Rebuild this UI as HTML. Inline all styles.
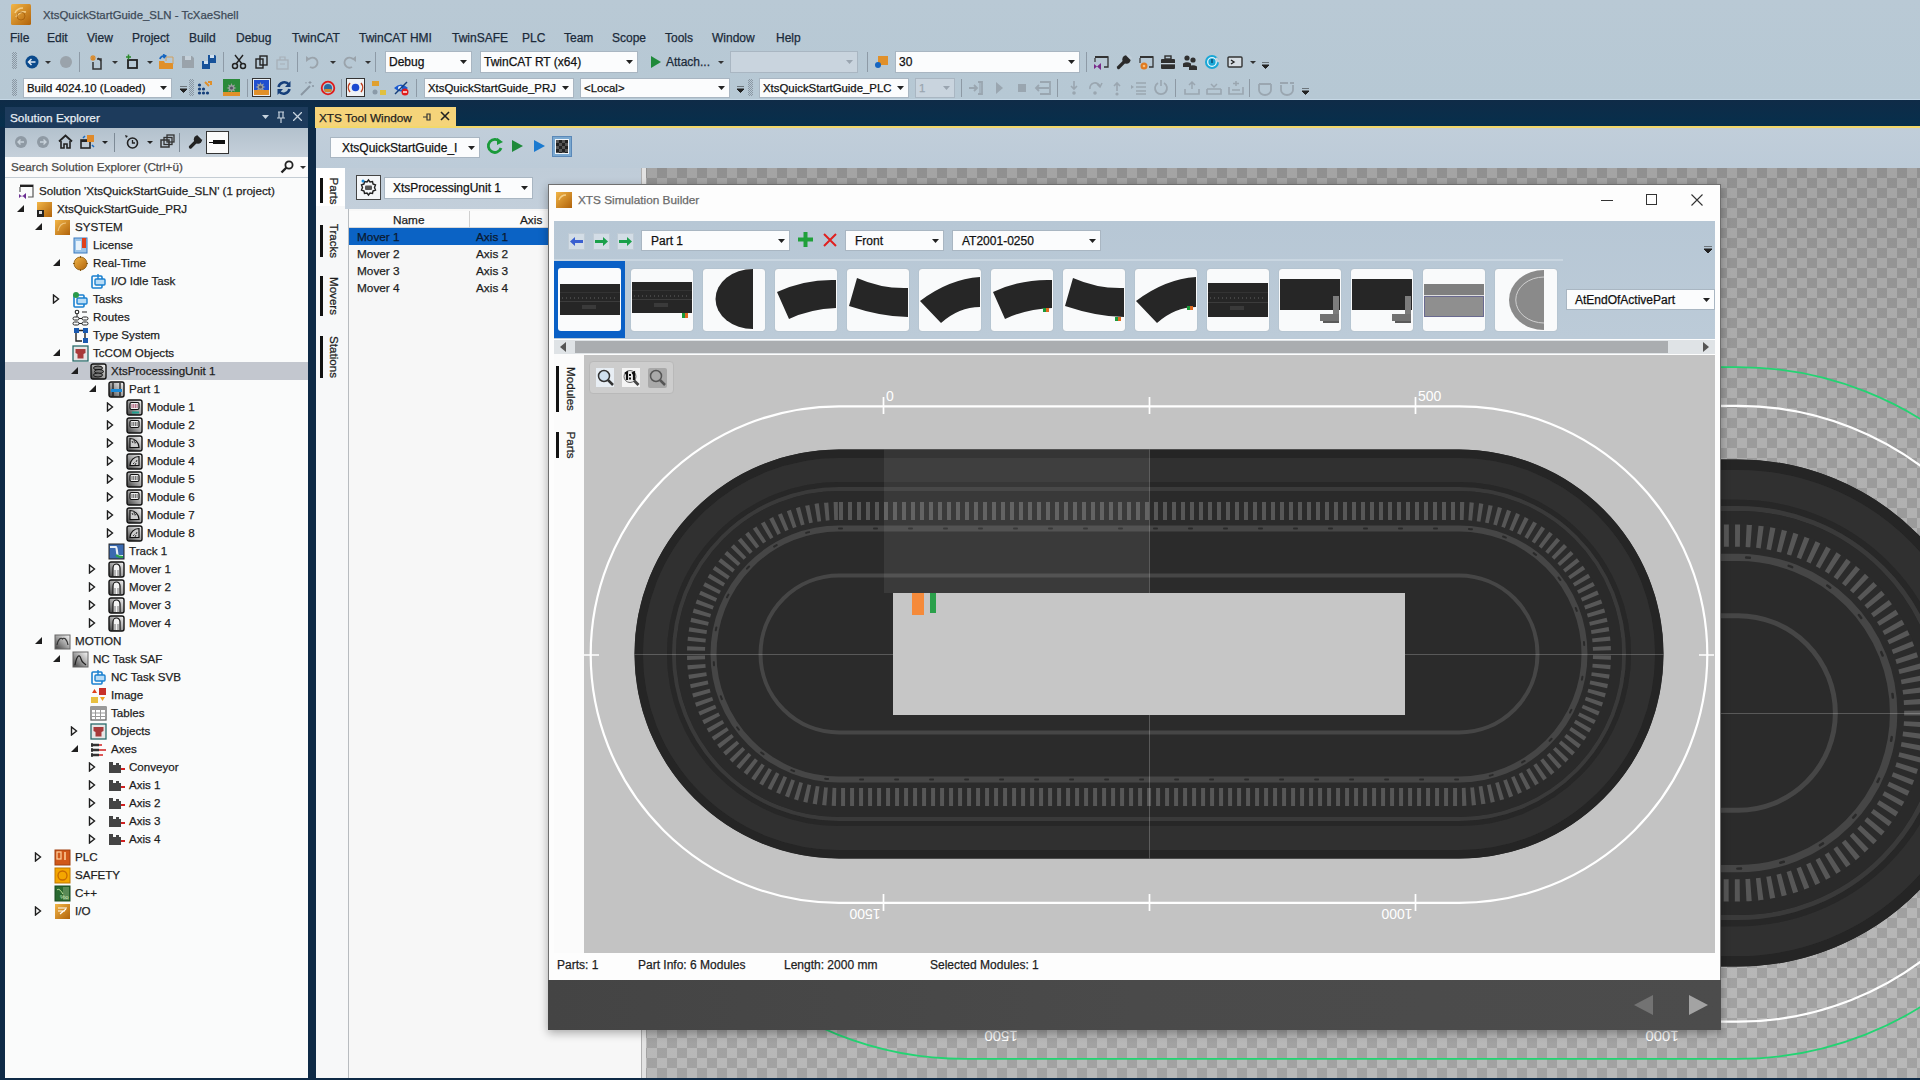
<!DOCTYPE html>
<html><head><meta charset="utf-8"><style>
html,body{margin:0;padding:0;width:1920px;height:1080px;overflow:hidden;background:#0e2a46;font-family:"Liberation Sans", sans-serif;}
svg text{font-family:"Liberation Sans", sans-serif;}
</style></head><body>
<svg width="0" height="0" style="position:absolute"><defs><linearGradient id="gOr" x1="0" y1="0" x2="1" y2="1"><stop offset="0" stop-color="#f2b648"/><stop offset="1" stop-color="#b0620a"/></linearGradient><linearGradient id="gGr" x1="1" y1="0" x2="0" y2="1"><stop offset="0" stop-color="#fafafa"/><stop offset="0.55" stop-color="#9a9a9a"/><stop offset="1" stop-color="#3a3a3a"/></linearGradient></defs></svg><div style="position:absolute;left:0px;top:0px;width:1920px;height:100px;background:linear-gradient(#b9c9d5,#b6c8d4)"></div><div style="position:absolute;left:0px;top:99px;width:1920px;height:1px;background:#c6d8e6"></div><svg style="position:absolute;left:11px;top:4px;" width="20" height="21" viewBox="0 0 20 21"><rect x="0" y="0" width="20" height="21" rx="1.5" fill="url(#gOr)"/><path d="M4 9Q6 4 12 4M5 13Q8 7 15 8" stroke="#f8d898" stroke-width="1.6" fill="none" opacity="0.85"/><circle cx="10" cy="12" r="4" fill="none" stroke="#a05a08" stroke-width="1" opacity="0.7"/></svg><div style="position:absolute;left:43px;top:7px;height:16px;line-height:16px;font-size:11.4px;color:#3d4a57;white-space:pre;-webkit-text-stroke:0.25px #3d4a57;">XtsQuickStartGuide_SLN - TcXaeShell</div><div style="position:absolute;left:10px;top:30px;height:16px;line-height:16px;font-size:12px;color:#1b2a3a;white-space:pre;-webkit-text-stroke:0.25px #1b2a3a;">File</div><div style="position:absolute;left:47px;top:30px;height:16px;line-height:16px;font-size:12px;color:#1b2a3a;white-space:pre;-webkit-text-stroke:0.25px #1b2a3a;">Edit</div><div style="position:absolute;left:87px;top:30px;height:16px;line-height:16px;font-size:12px;color:#1b2a3a;white-space:pre;-webkit-text-stroke:0.25px #1b2a3a;">View</div><div style="position:absolute;left:132px;top:30px;height:16px;line-height:16px;font-size:12px;color:#1b2a3a;white-space:pre;-webkit-text-stroke:0.25px #1b2a3a;">Project</div><div style="position:absolute;left:189px;top:30px;height:16px;line-height:16px;font-size:12px;color:#1b2a3a;white-space:pre;-webkit-text-stroke:0.25px #1b2a3a;">Build</div><div style="position:absolute;left:236px;top:30px;height:16px;line-height:16px;font-size:12px;color:#1b2a3a;white-space:pre;-webkit-text-stroke:0.25px #1b2a3a;">Debug</div><div style="position:absolute;left:292px;top:30px;height:16px;line-height:16px;font-size:12px;color:#1b2a3a;white-space:pre;-webkit-text-stroke:0.25px #1b2a3a;">TwinCAT</div><div style="position:absolute;left:359px;top:30px;height:16px;line-height:16px;font-size:12px;color:#1b2a3a;white-space:pre;-webkit-text-stroke:0.25px #1b2a3a;">TwinCAT HMI</div><div style="position:absolute;left:452px;top:30px;height:16px;line-height:16px;font-size:12px;color:#1b2a3a;white-space:pre;-webkit-text-stroke:0.25px #1b2a3a;">TwinSAFE</div><div style="position:absolute;left:522px;top:30px;height:16px;line-height:16px;font-size:12px;color:#1b2a3a;white-space:pre;-webkit-text-stroke:0.25px #1b2a3a;">PLC</div><div style="position:absolute;left:564px;top:30px;height:16px;line-height:16px;font-size:12px;color:#1b2a3a;white-space:pre;-webkit-text-stroke:0.25px #1b2a3a;">Team</div><div style="position:absolute;left:612px;top:30px;height:16px;line-height:16px;font-size:12px;color:#1b2a3a;white-space:pre;-webkit-text-stroke:0.25px #1b2a3a;">Scope</div><div style="position:absolute;left:665px;top:30px;height:16px;line-height:16px;font-size:12px;color:#1b2a3a;white-space:pre;-webkit-text-stroke:0.25px #1b2a3a;">Tools</div><div style="position:absolute;left:712px;top:30px;height:16px;line-height:16px;font-size:12px;color:#1b2a3a;white-space:pre;-webkit-text-stroke:0.25px #1b2a3a;">Window</div><div style="position:absolute;left:776px;top:30px;height:16px;line-height:16px;font-size:12px;color:#1b2a3a;white-space:pre;-webkit-text-stroke:0.25px #1b2a3a;">Help</div><div style="position:absolute;left:12px;top:52px;width:5px;height:17px;background-image:conic-gradient(#8a97a3 25%,transparent 0 50%,#8a97a3 0 75%,transparent 0);background-size:2px 2px"></div><div style="position:absolute;left:12px;top:79px;width:5px;height:17px;background-image:conic-gradient(#8a97a3 25%,transparent 0 50%,#8a97a3 0 75%,transparent 0);background-size:2px 2px"></div><div style="position:absolute;left:189px;top:79px;width:5px;height:17px;background-image:conic-gradient(#8a97a3 25%,transparent 0 50%,#8a97a3 0 75%,transparent 0);background-size:2px 2px"></div><div style="position:absolute;left:748px;top:79px;width:5px;height:17px;background-image:conic-gradient(#8a97a3 25%,transparent 0 50%,#8a97a3 0 75%,transparent 0);background-size:2px 2px"></div><div style="position:absolute;left:385px;top:51px;width:87px;height:22px;background:#fbfcfd;border:1px solid #a9b6c2;box-sizing:border-box"></div><div style="position:absolute;left:389px;top:54.0px;height:16px;line-height:16px;font-size:12px;color:#111;white-space:pre;-webkit-text-stroke:0.25px #111;">Debug</div><svg style="position:absolute;left:460px;top:60.0px;" width="8" height="5" viewBox="0 0 8 5"><path d="M0 0H7L3.5 4Z" fill="#222"/></svg><div style="position:absolute;left:480px;top:51px;width:158px;height:22px;background:#fbfcfd;border:1px solid #a9b6c2;box-sizing:border-box"></div><div style="position:absolute;left:484px;top:54.0px;height:16px;line-height:16px;font-size:12px;color:#111;white-space:pre;-webkit-text-stroke:0.25px #111;">TwinCAT RT (x64)</div><svg style="position:absolute;left:626px;top:60.0px;" width="8" height="5" viewBox="0 0 8 5"><path d="M0 0H7L3.5 4Z" fill="#222"/></svg><div style="position:absolute;left:730px;top:51px;width:128px;height:22px;background:#c9d4de;border:1px solid #a9b6c2;box-sizing:border-box"></div><div style="position:absolute;left:734px;top:54.0px;height:16px;line-height:16px;font-size:12px;color:#111;white-space:pre;-webkit-text-stroke:0.25px #111;"></div><svg style="position:absolute;left:846px;top:60.0px;" width="8" height="5" viewBox="0 0 8 5"><path d="M0 0H7L3.5 4Z" fill="#9aa5b0"/></svg><div style="position:absolute;left:666px;top:54px;height:16px;line-height:16px;font-size:12px;color:#1b2a3a;white-space:pre;-webkit-text-stroke:0.25px #1b2a3a;">Attach...</div><div style="position:absolute;left:895px;top:51px;width:185px;height:22px;background:#fbfcfd;border:1px solid #a9b6c2;box-sizing:border-box"></div><div style="position:absolute;left:899px;top:54.0px;height:16px;line-height:16px;font-size:12px;color:#111;white-space:pre;-webkit-text-stroke:0.25px #111;">30</div><svg style="position:absolute;left:1068px;top:60.0px;" width="8" height="5" viewBox="0 0 8 5"><path d="M0 0H7L3.5 4Z" fill="#222"/></svg><div style="position:absolute;left:23px;top:78px;width:149px;height:20px;background:#fbfcfd;border:1px solid #a9b6c2;box-sizing:border-box"></div><div style="position:absolute;left:27px;top:80.0px;height:16px;line-height:16px;font-size:11.4px;color:#111;white-space:pre;-webkit-text-stroke:0.25px #111;">Build 4024.10 (Loaded)</div><svg style="position:absolute;left:160px;top:86.0px;" width="8" height="5" viewBox="0 0 8 5"><path d="M0 0H7L3.5 4Z" fill="#222"/></svg><div style="position:absolute;left:424px;top:78px;width:150px;height:20px;background:#fbfcfd;border:1px solid #a9b6c2;box-sizing:border-box"></div><div style="position:absolute;left:428px;top:80.0px;height:16px;line-height:16px;font-size:11.4px;color:#111;white-space:pre;-webkit-text-stroke:0.25px #111;">XtsQuickStartGuide_PRJ</div><svg style="position:absolute;left:562px;top:86.0px;" width="8" height="5" viewBox="0 0 8 5"><path d="M0 0H7L3.5 4Z" fill="#222"/></svg><div style="position:absolute;left:580px;top:78px;width:150px;height:20px;background:#fbfcfd;border:1px solid #a9b6c2;box-sizing:border-box"></div><div style="position:absolute;left:584px;top:80.0px;height:16px;line-height:16px;font-size:11.4px;color:#111;white-space:pre;-webkit-text-stroke:0.25px #111;">&lt;Local&gt;</div><svg style="position:absolute;left:718px;top:86.0px;" width="8" height="5" viewBox="0 0 8 5"><path d="M0 0H7L3.5 4Z" fill="#222"/></svg><div style="position:absolute;left:759px;top:78px;width:150px;height:20px;background:#fbfcfd;border:1px solid #a9b6c2;box-sizing:border-box"></div><div style="position:absolute;left:763px;top:80.0px;height:16px;line-height:16px;font-size:11.4px;color:#111;white-space:pre;-webkit-text-stroke:0.25px #111;">XtsQuickStartGuide_PLC</div><svg style="position:absolute;left:897px;top:86.0px;" width="8" height="5" viewBox="0 0 8 5"><path d="M0 0H7L3.5 4Z" fill="#222"/></svg><div style="position:absolute;left:915px;top:78px;width:40px;height:20px;background:#c9d4de;border:1px solid #a9b6c2;box-sizing:border-box"></div><div style="position:absolute;left:919px;top:80.0px;height:16px;line-height:16px;font-size:11.4px;color:#9aa5b0;white-space:pre;-webkit-text-stroke:0.25px #9aa5b0;">1</div><svg style="position:absolute;left:943px;top:86.0px;" width="8" height="5" viewBox="0 0 8 5"><path d="M0 0H7L3.5 4Z" fill="#9aa5b0"/></svg><svg style="position:absolute;left:24px;top:54px;" width="16" height="16" viewBox="0 0 16 16"><circle cx="8" cy="8" r="6.5" fill="#0b4a8c"/><path d="M11.5 8H5M7.5 5L4.5 8L7.5 11" stroke="#dfe8f2" stroke-width="1.5" fill="none"/></svg><svg style="position:absolute;left:58px;top:54px;" width="16" height="16" viewBox="0 0 16 16"><circle cx="8" cy="8" r="6" fill="#9aa3ab"/></svg><svg style="position:absolute;left:89px;top:54px;" width="16" height="16" viewBox="0 0 16 16"><path d="M4 8V15H12V5H8" fill="none" stroke="#333" stroke-width="1.5"/><path d="M9 4L12 7" stroke="#333" stroke-width="1.3"/><path d="M4 1V7M1 4H7M2 2L6 6M6 2L2 6" stroke="#d98a2b" stroke-width="1.2"/></svg><svg style="position:absolute;left:124px;top:54px;" width="16" height="16" viewBox="0 0 16 16"><rect x="4" y="6" width="9" height="8" fill="none" stroke="#222" stroke-width="1.8"/><path d="M2 3H7M4.5 0.5V5.5" stroke="#2a8a2a" stroke-width="1.5"/></svg><svg style="position:absolute;left:158px;top:54px;" width="16" height="16" viewBox="0 0 16 16"><path d="M1 7H6L7 9H15V15H1Z" fill="#e0902a"/><path d="M8 7V3H15V10" fill="none" stroke="#d0a060" stroke-width="1"/><path d="M2 5A4 4 0 0 1 7 2M5 0.5L7.5 2L5.5 4" stroke="#1565c0" stroke-width="1.8" fill="none"/></svg><svg style="position:absolute;left:180px;top:54px;" width="16" height="16" viewBox="0 0 16 16"><path d="M2 2H12L14 4V14H2Z" fill="#9aa3ab"/><rect x="5" y="2" width="6" height="4" fill="#c5d0d9"/></svg><svg style="position:absolute;left:201px;top:54px;" width="16" height="16" viewBox="0 0 16 16"><path d="M1 7H8L9 8V15H1Z" fill="#17529a"/><rect x="3" y="7" width="4" height="3" fill="#cfe0f0"/><path d="M7 1H14L15 2V9H7Z" fill="#17529a"/><rect x="9" y="1" width="4" height="3" fill="#cfe0f0"/></svg><svg style="position:absolute;left:231px;top:54px;" width="16" height="16" viewBox="0 0 16 16"><circle cx="4" cy="12" r="2.5" fill="none" stroke="#222" stroke-width="1.5"/><circle cx="12" cy="12" r="2.5" fill="none" stroke="#222" stroke-width="1.5"/><path d="M5 10L12 1M11 10L4 1" stroke="#222" stroke-width="1.4"/></svg><svg style="position:absolute;left:254px;top:54px;" width="16" height="16" viewBox="0 0 16 16"><rect x="2" y="5" width="7" height="9" fill="none" stroke="#222" stroke-width="1.4"/><rect x="6" y="2" width="7" height="9" fill="none" stroke="#222" stroke-width="1.4"/></svg><svg style="position:absolute;left:275px;top:54px;" width="16" height="16" viewBox="0 0 16 16"><rect x="2" y="6" width="11" height="9" fill="none" stroke="#a7b0b8" stroke-width="1.3"/><path d="M5 6V3H10V6M5 10H10" stroke="#a7b0b8" stroke-width="1.2" fill="none"/></svg><svg style="position:absolute;left:305px;top:54px;" width="16" height="16" viewBox="0 0 16 16"><path d="M5 13A5 5 0 1 0 4 5" stroke="#9aa3ab" stroke-width="2" fill="none"/><path d="M1 2L5 5L1 8Z" fill="#9aa3ab"/></svg><svg style="position:absolute;left:341px;top:54px;" width="16" height="16" viewBox="0 0 16 16"><path d="M11 13A5 5 0 1 1 12 5" stroke="#9aa3ab" stroke-width="2" fill="none"/><path d="M15 2L11 5L15 8Z" fill="#9aa3ab"/></svg><svg style="position:absolute;left:648px;top:54px;" width="16" height="16" viewBox="0 0 16 16"><path d="M3 2L13 8L3 14Z" fill="#1f8a3a"/></svg><svg style="position:absolute;left:873px;top:54px;" width="16" height="16" viewBox="0 0 16 16"><rect x="5" y="2" width="10" height="9" fill="#e0902a"/><circle cx="5" cy="11" r="3" fill="#1565c0"/></svg><svg style="position:absolute;left:1093px;top:54px;" width="16" height="16" viewBox="0 0 16 16"><path d="M2 3H15V13H11" fill="none" stroke="#333" stroke-width="1.3"/><rect x="2" y="2" width="13" height="2" fill="#333"/><path d="M2 4V8" stroke="#333" stroke-width="1.2"/><path d="M1 10L4 12.5L8 9V16L4 12.5L1 15Z" fill="#7a2a8a"/></svg><svg style="position:absolute;left:1116px;top:54px;" width="16" height="16" viewBox="0 0 16 16"><path d="M2.5 13.5L9 7" stroke="#2a2a2a" stroke-width="3.2" stroke-linecap="round"/><circle cx="10.5" cy="5.5" r="4.2" fill="#2a2a2a"/><path d="M11 0.5L15.5 5" stroke="#c0ced9" stroke-width="2.6"/></svg><svg style="position:absolute;left:1138px;top:54px;" width="16" height="16" viewBox="0 0 16 16"><path d="M2 3H15V13H11" fill="none" stroke="#333" stroke-width="1.3"/><rect x="2" y="2" width="13" height="2" fill="#333"/><path d="M2 4V9" stroke="#333" stroke-width="1.2"/><circle cx="6" cy="12" r="3.5" fill="#e07a20"/><circle cx="6" cy="12" r="1.3" fill="#f6c080"/></svg><svg style="position:absolute;left:1160px;top:54px;" width="16" height="16" viewBox="0 0 16 16"><rect x="1" y="5" width="14" height="10" rx="1" fill="#2f2f2f"/><rect x="5" y="2" width="6" height="3" fill="none" stroke="#2f2f2f" stroke-width="1.4"/><rect x="1" y="9" width="14" height="1.3" fill="#c5d2dc"/></svg><svg style="position:absolute;left:1182px;top:54px;" width="16" height="16" viewBox="0 0 16 16"><circle cx="5" cy="4" r="2.6" fill="#2f2f2f"/><circle cx="11" cy="6" r="2.6" fill="#2f2f2f"/><path d="M1 13V9.5Q5 7 9 9.5V13Z" fill="#2f2f2f"/><path d="M7 16V12.5Q11 10 15 12.5V16Z" fill="#2f2f2f"/></svg><svg style="position:absolute;left:1204px;top:54px;" width="16" height="16" viewBox="0 0 16 16"><circle cx="8" cy="8" r="7" fill="#19a7d6"/><circle cx="8" cy="8" r="4.3" fill="none" stroke="#e8f6fc" stroke-width="1.3"/><path d="M12 4L15 8" stroke="#c5d2dc" stroke-width="2.5"/><path d="M8 5V9" stroke="#0b4a70" stroke-width="1.5"/></svg><svg style="position:absolute;left:1227px;top:54px;" width="16" height="16" viewBox="0 0 16 16"><rect x="1" y="3" width="14" height="10" rx="1" fill="#d6dde3" stroke="#333" stroke-width="1.4"/><path d="M4 6L7 8L4 10" stroke="#222" stroke-width="1.4" fill="none"/></svg><svg style="position:absolute;left:45px;top:61px;" width="6" height="4" viewBox="0 0 6 4"><path d="M0 0H6L3 3Z" fill="#333"/></svg><svg style="position:absolute;left:112px;top:61px;" width="6" height="4" viewBox="0 0 6 4"><path d="M0 0H6L3 3Z" fill="#333"/></svg><svg style="position:absolute;left:147px;top:61px;" width="6" height="4" viewBox="0 0 6 4"><path d="M0 0H6L3 3Z" fill="#333"/></svg><svg style="position:absolute;left:330px;top:61px;" width="6" height="4" viewBox="0 0 6 4"><path d="M0 0H6L3 3Z" fill="#333"/></svg><svg style="position:absolute;left:365px;top:61px;" width="6" height="4" viewBox="0 0 6 4"><path d="M0 0H6L3 3Z" fill="#333"/></svg><svg style="position:absolute;left:718px;top:61px;" width="6" height="4" viewBox="0 0 6 4"><path d="M0 0H6L3 3Z" fill="#333"/></svg><svg style="position:absolute;left:1250px;top:61px;" width="6" height="4" viewBox="0 0 6 4"><path d="M0 0H6L3 3Z" fill="#333"/></svg><div style="position:absolute;left:79px;top:52px;width:1px;height:20px;background:#8d9aa6"></div><div style="position:absolute;left:223px;top:52px;width:1px;height:20px;background:#8d9aa6"></div><div style="position:absolute;left:297px;top:52px;width:1px;height:20px;background:#8d9aa6"></div><div style="position:absolute;left:375px;top:52px;width:1px;height:20px;background:#8d9aa6"></div><div style="position:absolute;left:867px;top:52px;width:1px;height:20px;background:#8d9aa6"></div><div style="position:absolute;left:1086px;top:52px;width:1px;height:20px;background:#8d9aa6"></div><svg style="position:absolute;left:197px;top:80px;" width="16" height="16" viewBox="0 0 16 16"><circle cx="2.5" cy="13" r="1.6" fill="#163f7a"/><circle cx="6.5" cy="13" r="1.6" fill="#163f7a"/><circle cx="10.5" cy="13" r="1.6" fill="#163f7a"/><circle cx="2.5" cy="9" r="1.6" fill="#163f7a"/><circle cx="6.5" cy="9" r="1.6" fill="#163f7a"/><circle cx="2.5" cy="5" r="1.6" fill="#163f7a"/><path d="M8 2L12 6M11 2H14V5" stroke="#e0902a" stroke-width="2" fill="none"/></svg><svg style="position:absolute;left:223px;top:79px;" width="17" height="17" viewBox="0 0 17 17"><rect x="0" y="0" width="17" height="17" fill="#2a8a3a"/><path d="M8.5 4L9.5 6.5L12 5.5L11 8L13.5 9L11 10L12 12.5L9.5 11.5L8.5 14L7.5 11.5L5 12.5L6 10L3.5 9L6 8L5 5.5L7.5 6.5Z" fill="#9aa0a0"/><circle cx="8.5" cy="9" r="1.6" fill="#556"/><rect x="0" y="13" width="17" height="4" fill="#e0902a"/></svg><svg style="position:absolute;left:252px;top:78px;" width="19" height="19" viewBox="0 0 19 19"><rect x="0.5" y="0.5" width="18" height="18" fill="#e8eef3" stroke="#333"/><rect x="2" y="2" width="15" height="15" fill="#1f4fd0"/><path d="M8.5 4L9.5 6.5L12 5.5L11 8L13.5 9L11 10L12 12.5L9.5 11.5L8.5 14L7.5 11.5L5 12.5L6 10L3.5 9L6 8L5 5.5L7.5 6.5Z" fill="#9aa0a0"/><circle cx="8.5" cy="9" r="1.6" fill="#556"/><rect x="2" y="12" width="15" height="5" fill="#e0902a"/></svg><svg style="position:absolute;left:276px;top:80px;" width="16" height="16" viewBox="0 0 16 16"><path d="M2.5 7A6 6 0 0 1 13 4.5" stroke="#163f7a" stroke-width="2.6" fill="none"/><path d="M14.5 1V7H9Z" fill="#163f7a"/><path d="M13.5 9A6 6 0 0 1 3 11.5" stroke="#163f7a" stroke-width="2.6" fill="none"/><path d="M1.5 15V9H7Z" fill="#163f7a"/></svg><svg style="position:absolute;left:298px;top:80px;" width="16" height="16" viewBox="0 0 16 16"><path d="M3 15L12 6" stroke="#8a96a2" stroke-width="2"/><path d="M12 1V4M10.5 2.5H13.5M15 5V7M14 6H16M8 2V3.5" stroke="#8a96a2" stroke-width="1"/></svg><svg style="position:absolute;left:320px;top:80px;" width="16" height="16" viewBox="0 0 16 16"><circle cx="8" cy="8" r="6.3" fill="none" stroke="#e01a1a" stroke-width="1.8"/><circle cx="8" cy="8" r="4" fill="#2a6aa0"/><rect x="4.5" y="9" width="7" height="3" fill="#d08a30"/></svg><svg style="position:absolute;left:346px;top:78px;" width="19" height="19" viewBox="0 0 19 19"><rect x="0.5" y="0.5" width="18" height="18" fill="#eef2f5" stroke="#333"/><circle cx="9.5" cy="9.5" r="3.8" fill="#1a4ad0"/><path d="M4 5A7 7 0 0 0 4 14M15 5A7 7 0 0 1 15 14" stroke="#c04020" stroke-width="1.5" fill="none"/></svg><svg style="position:absolute;left:371px;top:80px;" width="16" height="16" viewBox="0 0 16 16"><rect x="1" y="1" width="7" height="5" fill="#e0a030"/><rect x="9" y="10" width="6" height="5" fill="#e0c040"/><circle cx="4" cy="12" r="2.5" fill="#8a9aa8"/></svg><svg style="position:absolute;left:393px;top:80px;" width="16" height="16" viewBox="0 0 16 16"><path d="M1 8Q8 1 15 8Q8 15 1 8Z" fill="#1a5ad0"/><circle cx="7" cy="8" r="2" fill="#e6eef6"/><path d="M2 14L14 2" stroke="#163f7a" stroke-width="1.5"/><circle cx="12" cy="12" r="3.5" fill="#e01a1a"/><rect x="10" y="11.3" width="4" height="1.4" fill="#fff"/></svg><div style="position:absolute;left:247px;top:79px;width:1px;height:18px;background:#8d9aa6"></div><div style="position:absolute;left:341px;top:79px;width:1px;height:18px;background:#8d9aa6"></div><div style="position:absolute;left:416px;top:79px;width:1px;height:18px;background:#8d9aa6"></div><svg style="position:absolute;left:968px;top:80px;" width="17" height="16" viewBox="0 0 17 16"><path d="M10 2H14V14H10M1 8H9M6 5L9 8L6 11" stroke="#9aa6b0" stroke-width="1.8" fill="none"/><path d="M12 2V14" stroke="#9aa6b0" stroke-width="1.2"/></svg><svg style="position:absolute;left:993px;top:80px;" width="17" height="16" viewBox="0 0 17 16"><path d="M3 2L10 8L3 14Z" fill="#9aa6b0"/></svg><svg style="position:absolute;left:1015px;top:80px;" width="17" height="16" viewBox="0 0 17 16"><rect x="3" y="4" width="8" height="8" fill="#9aa6b0"/></svg><svg style="position:absolute;left:1034px;top:80px;" width="17" height="16" viewBox="0 0 17 16"><path d="M6 2H16V14H6M15 8H2M5 5L2 8L5 11" stroke="#9aa6b0" stroke-width="1.8" fill="none"/></svg><svg style="position:absolute;left:1066px;top:80px;" width="17" height="16" viewBox="0 0 17 16"><path d="M8 1V9M5 6L8 9L11 6" stroke="#9aa6b0" stroke-width="1.6" fill="none"/><circle cx="8" cy="13" r="1.8" fill="#9aa6b0"/></svg><svg style="position:absolute;left:1087px;top:80px;" width="17" height="16" viewBox="0 0 17 16"><path d="M3 9A5 5 0 0 1 13 7M10 4L13 7L15 3" stroke="#9aa6b0" stroke-width="1.6" fill="none"/><circle cx="8" cy="13" r="1.8" fill="#9aa6b0"/></svg><svg style="position:absolute;left:1109px;top:80px;" width="17" height="16" viewBox="0 0 17 16"><path d="M8 11V3M5 6L8 3L11 6" stroke="#9aa6b0" stroke-width="1.6" fill="none"/><circle cx="8" cy="14" r="1.6" fill="#9aa6b0"/></svg><svg style="position:absolute;left:1130px;top:80px;" width="17" height="16" viewBox="0 0 17 16"><path d="M1 5L4 7L1 9Z" fill="#9aa6b0"/><path d="M6 3H16M6 7H16M6 11H16M6 14H16" stroke="#9aa6b0" stroke-width="1.3"/></svg><svg style="position:absolute;left:1153px;top:80px;" width="17" height="16" viewBox="0 0 17 16"><path d="M5 3A6 6 0 1 0 11 3" stroke="#9aa6b0" stroke-width="1.8" fill="none"/><path d="M8 0V6" stroke="#9aa6b0" stroke-width="1.6"/></svg><svg style="position:absolute;left:1184px;top:80px;" width="17" height="16" viewBox="0 0 17 16"><path d="M1 9V14H15V9" stroke="#9aa6b0" stroke-width="1.6" fill="none"/><path d="M8 2V9M5 5L8 2L11 5" stroke="#9aa6b0" stroke-width="1.5" fill="none"/></svg><svg style="position:absolute;left:1206px;top:80px;" width="17" height="16" viewBox="0 0 17 16"><path d="M1 9V14H15V9M1 9H15" stroke="#9aa6b0" stroke-width="1.6" fill="none"/><path d="M5 4L8 7L11 4" stroke="#9aa6b0" stroke-width="1.5" fill="none"/></svg><svg style="position:absolute;left:1228px;top:80px;" width="17" height="16" viewBox="0 0 17 16"><path d="M1 7V14H15V7M4 10H12" stroke="#9aa6b0" stroke-width="1.6" fill="none"/><path d="M8 1V6M5 3.5H11" stroke="#9aa6b0" stroke-width="1.5"/></svg><svg style="position:absolute;left:1257px;top:80px;" width="17" height="16" viewBox="0 0 17 16"><path d="M2 4V10A6 5 0 0 0 14 10V4M2 4H14" stroke="#9aa6b0" stroke-width="1.8" fill="none"/></svg><svg style="position:absolute;left:1279px;top:80px;" width="17" height="16" viewBox="0 0 17 16"><path d="M2 5V10A6 5 0 0 0 14 10V5M1 3H9M11 3H15" stroke="#9aa6b0" stroke-width="1.8" fill="none"/></svg><div style="position:absolute;left:961px;top:79px;width:1px;height:18px;background:#8d99a4"></div><div style="position:absolute;left:1057px;top:79px;width:1px;height:18px;background:#8d99a4"></div><div style="position:absolute;left:1175px;top:79px;width:1px;height:18px;background:#8d99a4"></div><div style="position:absolute;left:1249px;top:79px;width:1px;height:18px;background:#8d99a4"></div><svg style="position:absolute;left:180px;top:86px;" width="7" height="7" viewBox="0 0 7 7"><path d="M0 0H7M0 3H7L3.5 6.5Z" stroke="#222" fill="#222" stroke-width="1"/></svg><svg style="position:absolute;left:737px;top:86px;" width="7" height="7" viewBox="0 0 7 7"><path d="M0 0H7M0 3H7L3.5 6.5Z" stroke="#222" fill="#222" stroke-width="1"/></svg><svg style="position:absolute;left:1262px;top:62px;" width="7" height="7" viewBox="0 0 7 7"><path d="M0 0H7M0 3H7L3.5 6.5Z" stroke="#222" fill="#222" stroke-width="1"/></svg><svg style="position:absolute;left:1302px;top:88px;" width="7" height="7" viewBox="0 0 7 7"><path d="M0 0H7M0 3H7L3.5 6.5Z" stroke="#222" fill="#222" stroke-width="1"/></svg><div style="position:absolute;left:0px;top:100px;width:1920px;height:980px;background:linear-gradient(#0f2b47 0px,#062f4c 26px,#0e2a46 28px)"></div><div style="position:absolute;left:5px;top:107px;width:303px;height:21px;background:#1d3b5c"></div><div style="position:absolute;left:10px;top:109.5px;height:16px;line-height:16px;font-size:11.8px;color:#e8eef4;white-space:pre;-webkit-text-stroke:0.25px #e8eef4;">Solution Explorer</div><svg style="position:absolute;left:262px;top:115px;" width="7" height="5" viewBox="0 0 7 5"><path d="M0 0H7L3.5 4Z" fill="#c7d3de"/></svg><svg style="position:absolute;left:277px;top:111px;" width="8" height="12" viewBox="0 0 8 12"><path d="M1 1H7M2 1V7H6V1M0 7H8M4 7V12" stroke="#c7d3de" stroke-width="1.2" fill="none"/></svg><svg style="position:absolute;left:293px;top:112px;" width="9" height="9" viewBox="0 0 9 9"><path d="M0 0L9 9M9 0L0 9" stroke="#c7d3de" stroke-width="1.3"/></svg><div style="position:absolute;left:5px;top:128px;width:303px;height:29px;background:linear-gradient(#b3c1cd,#c5d0da)"></div><svg style="position:absolute;left:14px;top:135px;" width="15" height="15" viewBox="0 0 15 15"><circle cx="7" cy="7" r="6" fill="#8f9aa4"/><path d="M10 7H4M6.5 4.5L4 7L6.5 9.5" stroke="#c8d2da" stroke-width="1.4" fill="none"/></svg><svg style="position:absolute;left:36px;top:135px;" width="15" height="15" viewBox="0 0 15 15"><circle cx="7" cy="7" r="6" fill="#8f9aa4"/><path d="M4 7H10M7.5 4.5L10 7L7.5 9.5" stroke="#c8d2da" stroke-width="1.4" fill="none"/></svg><svg style="position:absolute;left:58px;top:134px;" width="15" height="15" viewBox="0 0 15 15"><path d="M1 7.5L7.5 1.5L14 7.5" fill="none" stroke="#222" stroke-width="1.8"/><path d="M3 7V14H6V10H9V14H12V7" fill="none" stroke="#222" stroke-width="1.6"/></svg><svg style="position:absolute;left:80px;top:134px;" width="15" height="15" viewBox="0 0 15 15"><rect x="1" y="6" width="9" height="8" fill="none" stroke="#222" stroke-width="1.6"/><rect x="1" y="6" width="9" height="2" fill="#222"/><rect x="7" y="1" width="7" height="7" fill="#e08a2a"/><path d="M3 4L5 2M12 11L14 13" stroke="#1a6ac0" stroke-width="1.5"/></svg><svg style="position:absolute;left:124px;top:134px;" width="15" height="15" viewBox="0 0 15 15"><circle cx="8.5" cy="9" r="5" fill="none" stroke="#222" stroke-width="1.6"/><path d="M8.5 6V9H11" stroke="#222" stroke-width="1.3" fill="none"/><path d="M1 1L4 2L2 4Z" fill="#222"/></svg><svg style="position:absolute;left:160px;top:134px;" width="15" height="15" viewBox="0 0 15 15"><rect x="1" y="6" width="8" height="7" fill="none" stroke="#333" stroke-width="1.5"/><rect x="4" y="3.5" width="8" height="7" fill="none" stroke="#333" stroke-width="1.3"/><rect x="7" y="1" width="7" height="7" fill="none" stroke="#333" stroke-width="1.3"/></svg><svg style="position:absolute;left:188px;top:134px;" width="15" height="15" viewBox="0 0 15 15"><path d="M2.5 13L8.5 7" stroke="#222" stroke-width="3.2" stroke-linecap="round"/><circle cx="10" cy="5.5" r="4.2" fill="#222"/><path d="M10.5 0.5L15 5" stroke="#bccad6" stroke-width="2.6"/></svg><svg style="position:absolute;left:102px;top:141px;" width="6" height="4" viewBox="0 0 6 4"><path d="M0 0H6L3 3Z" fill="#222"/></svg><svg style="position:absolute;left:147px;top:141px;" width="6" height="4" viewBox="0 0 6 4"><path d="M0 0H6L3 3Z" fill="#222"/></svg><div style="position:absolute;left:114px;top:133px;width:1px;height:19px;background:#7d8a96"></div><div style="position:absolute;left:179px;top:133px;width:1px;height:19px;background:#7d8a96"></div><div style="position:absolute;left:206px;top:131px;width:23px;height:23px;background:#fbfbfb;border:1px solid #333;box-sizing:border-box"></div><div style="position:absolute;left:209px;top:142px;width:5px;height:1px;background:#111"></div><div style="position:absolute;left:213px;top:140px;width:12px;height:4px;background:#111"></div><div style="position:absolute;left:5px;top:157px;width:303px;height:20px;background:#fbfbfb"></div><div style="position:absolute;left:11px;top:159px;height:16px;line-height:16px;font-size:11.7px;color:#4a4a4a;white-space:pre;-webkit-text-stroke:0.25px #4a4a4a;">Search Solution Explorer (Ctrl+ü)</div><svg style="position:absolute;left:280px;top:160px;" width="14" height="14" viewBox="0 0 14 14"><circle cx="9" cy="5" r="3.6" fill="none" stroke="#222" stroke-width="1.8"/><path d="M6.5 7.5L1.5 12.5" stroke="#222" stroke-width="2.4"/></svg><svg style="position:absolute;left:300px;top:166px;" width="6" height="4" viewBox="0 0 6 4"><path d="M0 0H6L3 3Z" fill="#333"/></svg><div style="position:absolute;left:5px;top:178px;width:303px;height:900px;background:#fafbfb"></div><div style="position:absolute;left:5px;top:177px;width:303px;height:1px;background:#c5cdd4"></div><svg style="position:absolute;left:18px;top:183px;" width="17" height="17" viewBox="0 0 17 17"><path d="M2 2H15V14H10" fill="none" stroke="#555" stroke-width="1.2"/><rect x="2" y="2" width="13" height="2" fill="#222"/><path d="M2 4V9" stroke="#555" stroke-width="1.2"/><path d="M1 11L4 13.5L8 10V16L4 12.5L1 15Z" fill="#6a2c91"/></svg><div style="position:absolute;left:39px;top:183px;height:16px;line-height:16px;font-size:11.6px;color:#1e1e1e;white-space:pre;-webkit-text-stroke:0.25px #1e1e1e;">Solution 'XtsQuickStartGuide_SLN' (1 project)</div><svg style="position:absolute;left:17px;top:205px;" width="8" height="8" viewBox="0 0 8 8"><path d="M7 0V7H0Z" fill="#1e1e1e"/></svg><svg style="position:absolute;left:36px;top:201px;" width="17" height="17" viewBox="0 0 17 17"><rect x="1" y="1" width="15" height="15" fill="url(#gOr)"/><rect x="1" y="9" width="7" height="7" fill="#222"/><rect x="3" y="10" width="3" height="3" fill="#ddd"/></svg><div style="position:absolute;left:57px;top:201px;height:16px;line-height:16px;font-size:11.6px;color:#1e1e1e;white-space:pre;-webkit-text-stroke:0.25px #1e1e1e;">XtsQuickStartGuide_PRJ</div><svg style="position:absolute;left:35px;top:223px;" width="8" height="8" viewBox="0 0 8 8"><path d="M7 0V7H0Z" fill="#1e1e1e"/></svg><svg style="position:absolute;left:54px;top:219px;" width="17" height="17" viewBox="0 0 17 17"><rect x="1" y="1" width="15" height="15" fill="url(#gOr)"/><path d="M4 12C5 7 8 4 12 4" fill="none" stroke="#f6d090" stroke-width="1.2" opacity="0.8"/></svg><div style="position:absolute;left:75px;top:219px;height:16px;line-height:16px;font-size:11.6px;color:#1e1e1e;white-space:pre;-webkit-text-stroke:0.25px #1e1e1e;">SYSTEM</div><svg style="position:absolute;left:72px;top:237px;" width="17" height="17" viewBox="0 0 17 17"><rect x="2" y="1" width="13" height="15" fill="#9cc4e8" stroke="#3a7ac0"/><rect x="4" y="4" width="5" height="9" fill="#e8f2fa"/><rect x="10" y="1" width="4" height="10" fill="#e0401a"/></svg><div style="position:absolute;left:93px;top:237px;height:16px;line-height:16px;font-size:11.6px;color:#1e1e1e;white-space:pre;-webkit-text-stroke:0.25px #1e1e1e;">License</div><svg style="position:absolute;left:53px;top:259px;" width="8" height="8" viewBox="0 0 8 8"><path d="M7 0V7H0Z" fill="#1e1e1e"/></svg><svg style="position:absolute;left:72px;top:255px;" width="17" height="17" viewBox="0 0 17 17"><circle cx="8.5" cy="8.5" r="6.5" fill="url(#gOr)" stroke="#8a5a10" stroke-width="0.8"/><path d="M8.5 1V3M8.5 14V16M1 8.5H3M14 8.5H16" stroke="#8a5a10"/></svg><div style="position:absolute;left:93px;top:255px;height:16px;line-height:16px;font-size:11.6px;color:#1e1e1e;white-space:pre;-webkit-text-stroke:0.25px #1e1e1e;">Real-Time</div><svg style="position:absolute;left:90px;top:273px;" width="17" height="17" viewBox="0 0 17 17"><rect x="2" y="3" width="10" height="12" rx="1" fill="none" stroke="#1a80d0" stroke-width="1.6"/><rect x="5" y="6" width="10" height="6" rx="1" fill="#b8dcf6" stroke="#1a80d0" stroke-width="1.4"/><path d="M8 1V6" stroke="#1a80d0" stroke-width="1.4"/></svg><div style="position:absolute;left:111px;top:273px;height:16px;line-height:16px;font-size:11.6px;color:#1e1e1e;white-space:pre;-webkit-text-stroke:0.25px #1e1e1e;">I/O Idle Task</div><svg style="position:absolute;left:52px;top:294px;" width="8" height="10" viewBox="0 0 8 10"><path d="M1.5 1L6.5 5L1.5 9Z" fill="none" stroke="#1e1e1e" stroke-width="1.4"/></svg><svg style="position:absolute;left:72px;top:291px;" width="17" height="17" viewBox="0 0 17 17"><rect x="2" y="4" width="10" height="12" rx="1" fill="none" stroke="#1a80d0" stroke-width="1.6"/><rect x="5" y="7" width="10" height="6" rx="1" fill="#b8dcf6" stroke="#1a80d0" stroke-width="1.4"/><circle cx="4" cy="4" r="3" fill="#2a9a4a"/></svg><div style="position:absolute;left:93px;top:291px;height:16px;line-height:16px;font-size:11.6px;color:#1e1e1e;white-space:pre;-webkit-text-stroke:0.25px #1e1e1e;">Tasks</div><svg style="position:absolute;left:72px;top:309px;" width="17" height="17" viewBox="0 0 17 17"><circle cx="5" cy="3" r="1.8" fill="none" stroke="#222" stroke-width="1.1"/><path d="M5 5V8M10 3H15" stroke="#222"/><rect x="1" y="8" width="6" height="3" rx="1.5" fill="none" stroke="#222"/><rect x="10" y="8" width="6" height="3" rx="1.5" fill="none" stroke="#222"/><rect x="1" y="13" width="6" height="3" rx="1.5" fill="none" stroke="#222"/><rect x="10" y="13" width="6" height="3" rx="1.5" fill="none" stroke="#222"/><path d="M7 9.5H10M7 14.5H10" stroke="#222"/></svg><div style="position:absolute;left:93px;top:309px;height:16px;line-height:16px;font-size:11.6px;color:#1e1e1e;white-space:pre;-webkit-text-stroke:0.25px #1e1e1e;">Routes</div><svg style="position:absolute;left:72px;top:327px;" width="17" height="17" viewBox="0 0 17 17"><rect x="2" y="1" width="5" height="5" fill="#1a5ab0"/><rect x="11" y="1" width="5" height="5" fill="#1a5ab0"/><rect x="11" y="11" width="5" height="5" fill="#1a5ab0"/><path d="M4 6V14H10M7 3.5H11M13 6V11" stroke="#222" stroke-width="1.4" fill="none"/></svg><div style="position:absolute;left:93px;top:327px;height:16px;line-height:16px;font-size:11.6px;color:#1e1e1e;white-space:pre;-webkit-text-stroke:0.25px #1e1e1e;">Type System</div><svg style="position:absolute;left:53px;top:349px;" width="8" height="8" viewBox="0 0 8 8"><path d="M7 0V7H0Z" fill="#1e1e1e"/></svg><svg style="position:absolute;left:72px;top:345px;" width="17" height="17" viewBox="0 0 17 17"><rect x="1" y="1" width="15" height="15" fill="#e6e6e6" stroke="#2a6a6a" stroke-width="1.3"/><path d="M3.5 4H13.5V8L11.5 9V13.5H5.5V9L3.5 8Z" fill="#a83a3a"/></svg><div style="position:absolute;left:93px;top:345px;height:16px;line-height:16px;font-size:11.6px;color:#1e1e1e;white-space:pre;-webkit-text-stroke:0.25px #1e1e1e;">TcCOM Objects</div><div style="position:absolute;left:5px;top:362px;width:303px;height:18px;background:#c3c7cf"></div><svg style="position:absolute;left:71px;top:367px;" width="8" height="8" viewBox="0 0 8 8"><path d="M7 0V7H0Z" fill="#1e1e1e"/></svg><svg style="position:absolute;left:90px;top:363px;" width="17" height="17" viewBox="0 0 17 17"><rect x="1" y="1" width="15" height="15" rx="2" fill="url(#gGr)" stroke="#111" stroke-width="1.4"/><ellipse cx="8" cy="5" rx="4.5" ry="2" fill="#777" stroke="#111" stroke-width="1"/><ellipse cx="9" cy="8.5" rx="4.5" ry="2" fill="#777" stroke="#111" stroke-width="1"/><ellipse cx="8" cy="12" rx="4.5" ry="2" fill="#777" stroke="#111" stroke-width="1"/></svg><div style="position:absolute;left:111px;top:363px;height:16px;line-height:16px;font-size:11.6px;color:#1e1e1e;white-space:pre;-webkit-text-stroke:0.25px #1e1e1e;">XtsProcessingUnit 1</div><svg style="position:absolute;left:89px;top:385px;" width="8" height="8" viewBox="0 0 8 8"><path d="M7 0V7H0Z" fill="#1e1e1e"/></svg><svg style="position:absolute;left:108px;top:381px;" width="17" height="17" viewBox="0 0 17 17"><rect x="1" y="1" width="15" height="15" rx="2" fill="url(#gGr)" stroke="#111" stroke-width="1.4"/><path d="M5 2V15M12 2V15" stroke="#111" stroke-width="1.2"/><rect x="3" y="8" width="11" height="3" fill="#1a8ad8"/></svg><div style="position:absolute;left:129px;top:381px;height:16px;line-height:16px;font-size:11.6px;color:#1e1e1e;white-space:pre;-webkit-text-stroke:0.25px #1e1e1e;">Part 1</div><svg style="position:absolute;left:106px;top:402px;" width="8" height="10" viewBox="0 0 8 10"><path d="M1.5 1L6.5 5L1.5 9Z" fill="none" stroke="#1e1e1e" stroke-width="1.4"/></svg><svg style="position:absolute;left:126px;top:399px;" width="17" height="17" viewBox="0 0 17 17"><rect x="1" y="1" width="15" height="15" rx="2" fill="url(#gGr)" stroke="#111" stroke-width="1.4"/><rect x="4" y="3.5" width="9" height="7" rx="1.5" fill="#eee" stroke="#111" stroke-width="1.2"/><path d="M6 5V9M7.7 5V9M9.4 5V9M11.1 5V9" stroke="#a04060" stroke-width="0.8"/><rect x="6" y="12.5" width="7" height="2" fill="#20a090"/></svg><div style="position:absolute;left:147px;top:399px;height:16px;line-height:16px;font-size:11.6px;color:#1e1e1e;white-space:pre;-webkit-text-stroke:0.25px #1e1e1e;">Module 1</div><svg style="position:absolute;left:106px;top:420px;" width="8" height="10" viewBox="0 0 8 10"><path d="M1.5 1L6.5 5L1.5 9Z" fill="none" stroke="#1e1e1e" stroke-width="1.4"/></svg><svg style="position:absolute;left:126px;top:417px;" width="17" height="17" viewBox="0 0 17 17"><rect x="1" y="1" width="15" height="15" rx="2" fill="url(#gGr)" stroke="#111" stroke-width="1.4"/><rect x="4" y="3.5" width="9" height="7" rx="1.5" fill="#eee" stroke="#111" stroke-width="1.2"/><path d="M6 5V9M7.7 5V9M9.4 5V9M11.1 5V9" stroke="#444" stroke-width="0.8"/></svg><div style="position:absolute;left:147px;top:417px;height:16px;line-height:16px;font-size:11.6px;color:#1e1e1e;white-space:pre;-webkit-text-stroke:0.25px #1e1e1e;">Module 2</div><svg style="position:absolute;left:106px;top:438px;" width="8" height="10" viewBox="0 0 8 10"><path d="M1.5 1L6.5 5L1.5 9Z" fill="none" stroke="#1e1e1e" stroke-width="1.4"/></svg><svg style="position:absolute;left:126px;top:435px;" width="17" height="17" viewBox="0 0 17 17"><rect x="1" y="1" width="15" height="15" rx="2" fill="url(#gGr)" stroke="#111" stroke-width="1.4"/><path d="M4 3.5A9 9 0 0 1 13 12.5H4Z" fill="#ccc" stroke="#111" stroke-width="1.2"/><path d="M6 6L7 8M8 5L8.5 7.5M10 7L9 8.5" stroke="#222" stroke-width="0.9"/></svg><div style="position:absolute;left:147px;top:435px;height:16px;line-height:16px;font-size:11.6px;color:#1e1e1e;white-space:pre;-webkit-text-stroke:0.25px #1e1e1e;">Module 3</div><svg style="position:absolute;left:106px;top:456px;" width="8" height="10" viewBox="0 0 8 10"><path d="M1.5 1L6.5 5L1.5 9Z" fill="none" stroke="#1e1e1e" stroke-width="1.4"/></svg><svg style="position:absolute;left:126px;top:453px;" width="17" height="17" viewBox="0 0 17 17"><rect x="1" y="1" width="15" height="15" rx="2" fill="url(#gGr)" stroke="#111" stroke-width="1.4"/><path d="M4 12.5A9 9 0 0 1 13 3.5V12.5Z" fill="#ccc" stroke="#111" stroke-width="1.2"/><path d="M7 11L8.5 9.5M9 12L10 10M11 7L10 9" stroke="#222" stroke-width="0.9"/></svg><div style="position:absolute;left:147px;top:453px;height:16px;line-height:16px;font-size:11.6px;color:#1e1e1e;white-space:pre;-webkit-text-stroke:0.25px #1e1e1e;">Module 4</div><svg style="position:absolute;left:106px;top:474px;" width="8" height="10" viewBox="0 0 8 10"><path d="M1.5 1L6.5 5L1.5 9Z" fill="none" stroke="#1e1e1e" stroke-width="1.4"/></svg><svg style="position:absolute;left:126px;top:471px;" width="17" height="17" viewBox="0 0 17 17"><rect x="1" y="1" width="15" height="15" rx="2" fill="url(#gGr)" stroke="#111" stroke-width="1.4"/><rect x="4" y="3.5" width="9" height="7" rx="1.5" fill="#eee" stroke="#111" stroke-width="1.2"/><path d="M6 5V9M7.7 5V9M9.4 5V9M11.1 5V9" stroke="#444" stroke-width="0.8"/></svg><div style="position:absolute;left:147px;top:471px;height:16px;line-height:16px;font-size:11.6px;color:#1e1e1e;white-space:pre;-webkit-text-stroke:0.25px #1e1e1e;">Module 5</div><svg style="position:absolute;left:106px;top:492px;" width="8" height="10" viewBox="0 0 8 10"><path d="M1.5 1L6.5 5L1.5 9Z" fill="none" stroke="#1e1e1e" stroke-width="1.4"/></svg><svg style="position:absolute;left:126px;top:489px;" width="17" height="17" viewBox="0 0 17 17"><rect x="1" y="1" width="15" height="15" rx="2" fill="url(#gGr)" stroke="#111" stroke-width="1.4"/><rect x="4" y="3.5" width="9" height="7" rx="1.5" fill="#eee" stroke="#111" stroke-width="1.2"/><path d="M6 5V9M7.7 5V9M9.4 5V9M11.1 5V9" stroke="#444" stroke-width="0.8"/></svg><div style="position:absolute;left:147px;top:489px;height:16px;line-height:16px;font-size:11.6px;color:#1e1e1e;white-space:pre;-webkit-text-stroke:0.25px #1e1e1e;">Module 6</div><svg style="position:absolute;left:106px;top:510px;" width="8" height="10" viewBox="0 0 8 10"><path d="M1.5 1L6.5 5L1.5 9Z" fill="none" stroke="#1e1e1e" stroke-width="1.4"/></svg><svg style="position:absolute;left:126px;top:507px;" width="17" height="17" viewBox="0 0 17 17"><rect x="1" y="1" width="15" height="15" rx="2" fill="url(#gGr)" stroke="#111" stroke-width="1.4"/><path d="M4 3.5A9 9 0 0 1 13 12.5H4Z" fill="#ccc" stroke="#111" stroke-width="1.2"/><path d="M6 6L7 8M8 5L8.5 7.5M10 7L9 8.5" stroke="#222" stroke-width="0.9"/></svg><div style="position:absolute;left:147px;top:507px;height:16px;line-height:16px;font-size:11.6px;color:#1e1e1e;white-space:pre;-webkit-text-stroke:0.25px #1e1e1e;">Module 7</div><svg style="position:absolute;left:106px;top:528px;" width="8" height="10" viewBox="0 0 8 10"><path d="M1.5 1L6.5 5L1.5 9Z" fill="none" stroke="#1e1e1e" stroke-width="1.4"/></svg><svg style="position:absolute;left:126px;top:525px;" width="17" height="17" viewBox="0 0 17 17"><rect x="1" y="1" width="15" height="15" rx="2" fill="url(#gGr)" stroke="#111" stroke-width="1.4"/><path d="M4 12.5A9 9 0 0 1 13 3.5V12.5Z" fill="#ccc" stroke="#111" stroke-width="1.2"/><path d="M7 11L8.5 9.5M9 12L10 10M11 7L10 9" stroke="#222" stroke-width="0.9"/></svg><div style="position:absolute;left:147px;top:525px;height:16px;line-height:16px;font-size:11.6px;color:#1e1e1e;white-space:pre;-webkit-text-stroke:0.25px #1e1e1e;">Module 8</div><svg style="position:absolute;left:108px;top:543px;" width="17" height="17" viewBox="0 0 17 17"><rect x="1" y="1" width="15" height="15" fill="#3a6ab0" stroke="#222"/><path d="M2 4H8C9 4 9 13 10 13H15" stroke="#e8f0f8" stroke-width="2.2" fill="none"/><path d="M8 12C10 14 12 14 15 14" stroke="#2aa04a" stroke-width="2" fill="none"/></svg><div style="position:absolute;left:129px;top:543px;height:16px;line-height:16px;font-size:11.6px;color:#1e1e1e;white-space:pre;-webkit-text-stroke:0.25px #1e1e1e;">Track 1</div><svg style="position:absolute;left:88px;top:564px;" width="8" height="10" viewBox="0 0 8 10"><path d="M1.5 1L6.5 5L1.5 9Z" fill="none" stroke="#1e1e1e" stroke-width="1.4"/></svg><svg style="position:absolute;left:108px;top:561px;" width="17" height="17" viewBox="0 0 17 17"><rect x="1" y="1" width="15" height="15" rx="2" fill="url(#gGr)" stroke="#111" stroke-width="1.4"/><path d="M5 15V7A3.5 4 0 0 1 12 7V15" fill="#f4f4f4" stroke="#111" stroke-width="1.2"/><path d="M7 9V15M10 9V15" stroke="#555" stroke-width="0.8"/></svg><div style="position:absolute;left:129px;top:561px;height:16px;line-height:16px;font-size:11.6px;color:#1e1e1e;white-space:pre;-webkit-text-stroke:0.25px #1e1e1e;">Mover 1</div><svg style="position:absolute;left:88px;top:582px;" width="8" height="10" viewBox="0 0 8 10"><path d="M1.5 1L6.5 5L1.5 9Z" fill="none" stroke="#1e1e1e" stroke-width="1.4"/></svg><svg style="position:absolute;left:108px;top:579px;" width="17" height="17" viewBox="0 0 17 17"><rect x="1" y="1" width="15" height="15" rx="2" fill="url(#gGr)" stroke="#111" stroke-width="1.4"/><path d="M5 15V7A3.5 4 0 0 1 12 7V15" fill="#f4f4f4" stroke="#111" stroke-width="1.2"/><path d="M7 9V15M10 9V15" stroke="#555" stroke-width="0.8"/></svg><div style="position:absolute;left:129px;top:579px;height:16px;line-height:16px;font-size:11.6px;color:#1e1e1e;white-space:pre;-webkit-text-stroke:0.25px #1e1e1e;">Mover 2</div><svg style="position:absolute;left:88px;top:600px;" width="8" height="10" viewBox="0 0 8 10"><path d="M1.5 1L6.5 5L1.5 9Z" fill="none" stroke="#1e1e1e" stroke-width="1.4"/></svg><svg style="position:absolute;left:108px;top:597px;" width="17" height="17" viewBox="0 0 17 17"><rect x="1" y="1" width="15" height="15" rx="2" fill="url(#gGr)" stroke="#111" stroke-width="1.4"/><path d="M5 15V7A3.5 4 0 0 1 12 7V15" fill="#f4f4f4" stroke="#111" stroke-width="1.2"/><path d="M7 9V15M10 9V15" stroke="#555" stroke-width="0.8"/></svg><div style="position:absolute;left:129px;top:597px;height:16px;line-height:16px;font-size:11.6px;color:#1e1e1e;white-space:pre;-webkit-text-stroke:0.25px #1e1e1e;">Mover 3</div><svg style="position:absolute;left:88px;top:618px;" width="8" height="10" viewBox="0 0 8 10"><path d="M1.5 1L6.5 5L1.5 9Z" fill="none" stroke="#1e1e1e" stroke-width="1.4"/></svg><svg style="position:absolute;left:108px;top:615px;" width="17" height="17" viewBox="0 0 17 17"><rect x="1" y="1" width="15" height="15" rx="2" fill="url(#gGr)" stroke="#111" stroke-width="1.4"/><path d="M5 15V7A3.5 4 0 0 1 12 7V15" fill="#f4f4f4" stroke="#111" stroke-width="1.2"/><path d="M7 9V15M10 9V15" stroke="#555" stroke-width="0.8"/></svg><div style="position:absolute;left:129px;top:615px;height:16px;line-height:16px;font-size:11.6px;color:#1e1e1e;white-space:pre;-webkit-text-stroke:0.25px #1e1e1e;">Mover 4</div><svg style="position:absolute;left:35px;top:637px;" width="8" height="8" viewBox="0 0 8 8"><path d="M7 0V7H0Z" fill="#1e1e1e"/></svg><svg style="position:absolute;left:54px;top:633px;" width="17" height="17" viewBox="0 0 17 17"><rect x="1" y="2" width="15" height="14" fill="url(#gGr)" stroke="#666"/><path d="M3 12C4 6 7 4 8.5 6C10 4 13 6 14 12" stroke="#333" fill="none" stroke-width="1.2"/></svg><div style="position:absolute;left:75px;top:633px;height:16px;line-height:16px;font-size:11.6px;color:#1e1e1e;white-space:pre;-webkit-text-stroke:0.25px #1e1e1e;">MOTION</div><svg style="position:absolute;left:53px;top:655px;" width="8" height="8" viewBox="0 0 8 8"><path d="M7 0V7H0Z" fill="#1e1e1e"/></svg><svg style="position:absolute;left:72px;top:651px;" width="17" height="17" viewBox="0 0 17 17"><rect x="1" y="1" width="15" height="15" fill="url(#gGr)" stroke="#666"/><path d="M3 14C5 3 8 3 9 8C10 12 12 12 14 14" stroke="#222" fill="none" stroke-width="1.2"/></svg><div style="position:absolute;left:93px;top:651px;height:16px;line-height:16px;font-size:11.6px;color:#1e1e1e;white-space:pre;-webkit-text-stroke:0.25px #1e1e1e;">NC Task SAF</div><svg style="position:absolute;left:90px;top:669px;" width="17" height="17" viewBox="0 0 17 17"><rect x="2" y="3" width="10" height="12" rx="1" fill="none" stroke="#1a80d0" stroke-width="1.6"/><rect x="5" y="6" width="10" height="6" rx="1" fill="#b8dcf6" stroke="#1a80d0" stroke-width="1.4"/><path d="M8 1V6" stroke="#1a80d0" stroke-width="1.4"/></svg><div style="position:absolute;left:111px;top:669px;height:16px;line-height:16px;font-size:11.6px;color:#1e1e1e;white-space:pre;-webkit-text-stroke:0.25px #1e1e1e;">NC Task SVB</div><svg style="position:absolute;left:90px;top:687px;" width="17" height="17" viewBox="0 0 17 17"><rect x="9" y="1" width="7" height="7" fill="#c8302a"/><rect x="1" y="10" width="7" height="6" fill="#e8c040"/><path d="M2 6L4.5 2L7 6Z" fill="#e0401a"/><path d="M10 10L12.5 14L15 10Z" fill="#f0a020"/></svg><div style="position:absolute;left:111px;top:687px;height:16px;line-height:16px;font-size:11.6px;color:#1e1e1e;white-space:pre;-webkit-text-stroke:0.25px #1e1e1e;">Image</div><svg style="position:absolute;left:90px;top:705px;" width="17" height="17" viewBox="0 0 17 17"><rect x="1" y="2" width="15" height="13" fill="#fff" stroke="#666" stroke-width="1.3"/><rect x="1" y="2" width="15" height="3" fill="#999"/><path d="M1 8H16M1 11.5H16M5.5 5V15M10.5 5V15" stroke="#999"/></svg><div style="position:absolute;left:111px;top:705px;height:16px;line-height:16px;font-size:11.6px;color:#1e1e1e;white-space:pre;-webkit-text-stroke:0.25px #1e1e1e;">Tables</div><svg style="position:absolute;left:70px;top:726px;" width="8" height="10" viewBox="0 0 8 10"><path d="M1.5 1L6.5 5L1.5 9Z" fill="none" stroke="#1e1e1e" stroke-width="1.4"/></svg><svg style="position:absolute;left:90px;top:723px;" width="17" height="17" viewBox="0 0 17 17"><rect x="1" y="1" width="15" height="15" fill="#e6e6e6" stroke="#2a6a6a" stroke-width="1.3"/><path d="M3.5 4H13.5V8L11.5 9V13.5H5.5V9L3.5 8Z" fill="#a83a3a"/></svg><div style="position:absolute;left:111px;top:723px;height:16px;line-height:16px;font-size:11.6px;color:#1e1e1e;white-space:pre;-webkit-text-stroke:0.25px #1e1e1e;">Objects</div><svg style="position:absolute;left:71px;top:745px;" width="8" height="8" viewBox="0 0 8 8"><path d="M7 0V7H0Z" fill="#1e1e1e"/></svg><svg style="position:absolute;left:90px;top:741px;" width="17" height="17" viewBox="0 0 17 17"><path d="M1 4H9M1 9H9M1 14H9" stroke="#333" stroke-width="2.6"/><path d="M9 4H12M9 9H16M9 14H13" stroke="#d02020" stroke-width="1.6"/><path d="M2 2V6M2 7V11M2 12V16" stroke="#333" stroke-width="1.5"/></svg><div style="position:absolute;left:111px;top:741px;height:16px;line-height:16px;font-size:11.6px;color:#1e1e1e;white-space:pre;-webkit-text-stroke:0.25px #1e1e1e;">Axes</div><svg style="position:absolute;left:88px;top:762px;" width="8" height="10" viewBox="0 0 8 10"><path d="M1.5 1L6.5 5L1.5 9Z" fill="none" stroke="#1e1e1e" stroke-width="1.4"/></svg><svg style="position:absolute;left:108px;top:759px;" width="17" height="17" viewBox="0 0 17 17"><rect x="1" y="6" width="12" height="8" fill="#444"/><rect x="1" y="3" width="4" height="4" fill="#444"/><rect x="8" y="4" width="3" height="3" fill="#444"/><path d="M13 10H17" stroke="#d02020" stroke-width="2"/></svg><div style="position:absolute;left:129px;top:759px;height:16px;line-height:16px;font-size:11.6px;color:#1e1e1e;white-space:pre;-webkit-text-stroke:0.25px #1e1e1e;">Conveyor</div><svg style="position:absolute;left:88px;top:780px;" width="8" height="10" viewBox="0 0 8 10"><path d="M1.5 1L6.5 5L1.5 9Z" fill="none" stroke="#1e1e1e" stroke-width="1.4"/></svg><svg style="position:absolute;left:108px;top:777px;" width="17" height="17" viewBox="0 0 17 17"><rect x="1" y="6" width="12" height="8" fill="#444"/><rect x="1" y="3" width="4" height="4" fill="#444"/><rect x="8" y="4" width="3" height="3" fill="#444"/><path d="M13 10H17" stroke="#d02020" stroke-width="2"/></svg><div style="position:absolute;left:129px;top:777px;height:16px;line-height:16px;font-size:11.6px;color:#1e1e1e;white-space:pre;-webkit-text-stroke:0.25px #1e1e1e;">Axis 1</div><svg style="position:absolute;left:88px;top:798px;" width="8" height="10" viewBox="0 0 8 10"><path d="M1.5 1L6.5 5L1.5 9Z" fill="none" stroke="#1e1e1e" stroke-width="1.4"/></svg><svg style="position:absolute;left:108px;top:795px;" width="17" height="17" viewBox="0 0 17 17"><rect x="1" y="6" width="12" height="8" fill="#444"/><rect x="1" y="3" width="4" height="4" fill="#444"/><rect x="8" y="4" width="3" height="3" fill="#444"/><path d="M13 10H17" stroke="#d02020" stroke-width="2"/></svg><div style="position:absolute;left:129px;top:795px;height:16px;line-height:16px;font-size:11.6px;color:#1e1e1e;white-space:pre;-webkit-text-stroke:0.25px #1e1e1e;">Axis 2</div><svg style="position:absolute;left:88px;top:816px;" width="8" height="10" viewBox="0 0 8 10"><path d="M1.5 1L6.5 5L1.5 9Z" fill="none" stroke="#1e1e1e" stroke-width="1.4"/></svg><svg style="position:absolute;left:108px;top:813px;" width="17" height="17" viewBox="0 0 17 17"><rect x="1" y="6" width="12" height="8" fill="#444"/><rect x="1" y="3" width="4" height="4" fill="#444"/><rect x="8" y="4" width="3" height="3" fill="#444"/><path d="M13 10H17" stroke="#d02020" stroke-width="2"/></svg><div style="position:absolute;left:129px;top:813px;height:16px;line-height:16px;font-size:11.6px;color:#1e1e1e;white-space:pre;-webkit-text-stroke:0.25px #1e1e1e;">Axis 3</div><svg style="position:absolute;left:88px;top:834px;" width="8" height="10" viewBox="0 0 8 10"><path d="M1.5 1L6.5 5L1.5 9Z" fill="none" stroke="#1e1e1e" stroke-width="1.4"/></svg><svg style="position:absolute;left:108px;top:831px;" width="17" height="17" viewBox="0 0 17 17"><rect x="1" y="6" width="12" height="8" fill="#444"/><rect x="1" y="3" width="4" height="4" fill="#444"/><rect x="8" y="4" width="3" height="3" fill="#444"/><path d="M13 10H17" stroke="#d02020" stroke-width="2"/></svg><div style="position:absolute;left:129px;top:831px;height:16px;line-height:16px;font-size:11.6px;color:#1e1e1e;white-space:pre;-webkit-text-stroke:0.25px #1e1e1e;">Axis 4</div><svg style="position:absolute;left:34px;top:852px;" width="8" height="10" viewBox="0 0 8 10"><path d="M1.5 1L6.5 5L1.5 9Z" fill="none" stroke="#1e1e1e" stroke-width="1.4"/></svg><svg style="position:absolute;left:54px;top:849px;" width="17" height="17" viewBox="0 0 17 17"><rect x="1" y="1" width="15" height="15" fill="#d0581a" stroke="#a04010"/><rect x="3" y="3" width="4" height="7" fill="none" stroke="#ffd2a0" stroke-width="1.2"/><path d="M11 3V11" stroke="#ffd2a0" stroke-width="1.5"/></svg><div style="position:absolute;left:75px;top:849px;height:16px;line-height:16px;font-size:11.6px;color:#1e1e1e;white-space:pre;-webkit-text-stroke:0.25px #1e1e1e;">PLC</div><svg style="position:absolute;left:54px;top:867px;" width="17" height="17" viewBox="0 0 17 17"><rect x="1" y="1" width="15" height="15" fill="#f4a600" stroke="#c07800"/><circle cx="8.5" cy="8.5" r="4.5" fill="none" stroke="#c86a00" stroke-width="1.3"/></svg><div style="position:absolute;left:75px;top:867px;height:16px;line-height:16px;font-size:11.6px;color:#1e1e1e;white-space:pre;-webkit-text-stroke:0.25px #1e1e1e;">SAFETY</div><svg style="position:absolute;left:54px;top:885px;" width="17" height="17" viewBox="0 0 17 17"><rect x="1" y="1" width="15" height="15" fill="#2a6a30" stroke="#184a20"/><rect x="9" y="2" width="6" height="13" fill="#7aa070" opacity="0.6"/><path d="M3 5C5 3 7 6 9 9" stroke="#c8e8a0" fill="none"/><text x="6" y="14" font-size="6" fill="#d8f0c0">%o</text></svg><div style="position:absolute;left:75px;top:885px;height:16px;line-height:16px;font-size:11.6px;color:#1e1e1e;white-space:pre;-webkit-text-stroke:0.25px #1e1e1e;">C++</div><svg style="position:absolute;left:34px;top:906px;" width="8" height="10" viewBox="0 0 8 10"><path d="M1.5 1L6.5 5L1.5 9Z" fill="none" stroke="#1e1e1e" stroke-width="1.4"/></svg><svg style="position:absolute;left:54px;top:903px;" width="17" height="17" viewBox="0 0 17 17"><rect x="1" y="1" width="15" height="15" fill="url(#gOr)"/><path d="M4 5H13M4 8H11M6 11L12 6" stroke="#fff" stroke-width="1.2"/></svg><div style="position:absolute;left:75px;top:903px;height:16px;line-height:16px;font-size:11.6px;color:#1e1e1e;white-space:pre;-webkit-text-stroke:0.25px #1e1e1e;">I/O</div><div style="position:absolute;left:315px;top:107px;width:141px;height:21px;background:#f5d47a"></div><div style="position:absolute;left:319px;top:109.5px;height:16px;line-height:16px;font-size:11.8px;color:#1e1e1e;white-space:pre;-webkit-text-stroke:0.25px #1e1e1e;">XTS Tool Window</div><svg style="position:absolute;left:422px;top:112px;" width="10" height="10" viewBox="0 0 10 10"><path d="M1 5H5M5 2V8H8V2Z" stroke="#333" stroke-width="1.2" fill="none"/></svg><svg style="position:absolute;left:440px;top:111px;" width="10" height="10" viewBox="0 0 10 10"><path d="M1 1L9 9M9 1L1 9" stroke="#222" stroke-width="1.6"/></svg><div style="position:absolute;left:315px;top:126px;width:1605px;height:2px;background:#f2d86a"></div><div style="position:absolute;left:316px;top:128px;width:1604px;height:40px;background:linear-gradient(#c1ceda,#bccbd8)"></div><div style="position:absolute;left:330px;top:137px;width:150px;height:21px;background:#fbfcfd;border:1px solid #a9b6c2;box-sizing:border-box"></div><div style="position:absolute;left:342px;top:139.5px;height:16px;line-height:16px;font-size:12px;color:#111;white-space:pre;-webkit-text-stroke:0.25px #111;">XtsQuickStartGuide_I</div><svg style="position:absolute;left:468px;top:145.5px;" width="8" height="5" viewBox="0 0 8 5"><path d="M0 0H7L3.5 4Z" fill="#222"/></svg><svg style="position:absolute;left:486px;top:137px;" width="18" height="18" viewBox="0 0 18 18"><path d="M14 5A6.5 6.5 0 1 0 15 11" stroke="#1a9a3a" stroke-width="2.8" fill="none"/><path d="M11 1L17 5L11 8Z" fill="#1a9a3a"/></svg><svg style="position:absolute;left:510px;top:139px;" width="14" height="14" viewBox="0 0 14 14"><path d="M2 1L13 7L2 13Z" fill="#1f8a3a"/></svg><svg style="position:absolute;left:532px;top:139px;" width="14" height="14" viewBox="0 0 14 14"><path d="M2 1L13 7L2 13Z" fill="#1a7ad0"/></svg><div style="position:absolute;left:552px;top:136px;width:20px;height:21px;background:#7aa8d0;border:1px solid #5a88b8;box-sizing:border-box"></div><div style="position:absolute;left:555px;top:139px;width:14px;height:15px;background:#f0f4f8"></div><div style="position:absolute;left:556px;top:140px;width:12px;height:13px;background-image:conic-gradient(#222 25%,#555 0 50%,#222 0 75%,#555 0);background-size:6px 6px"></div><div style="position:absolute;left:316px;top:168px;width:32px;height:910px;background:#f7f8f9"></div><div style="position:absolute;left:348px;top:168px;width:1px;height:910px;background:#b8bcc0"></div><div style="position:absolute;left:316px;top:168px;width:29px;height:38px;background:#ffffff"></div><div style="position:absolute;left:320px;top:178px;width:3px;height:25px;background:#111"></div><div style="position:absolute;left:326px;top:182.5px;width:16px;height:16px;"><div style="position:absolute;left:8px;top:8px;transform:translate(-50%,-50%) rotate(90deg);white-space:pre;font-size:11.6px;line-height:16px;color:#1e1e1e;-webkit-text-stroke:0.25px #1e1e1e">Parts</div></div><div style="position:absolute;left:320px;top:225px;width:3px;height:32px;background:#111"></div><div style="position:absolute;left:326px;top:233.0px;width:16px;height:16px;"><div style="position:absolute;left:8px;top:8px;transform:translate(-50%,-50%) rotate(90deg);white-space:pre;font-size:11.6px;line-height:16px;color:#1e1e1e;-webkit-text-stroke:0.25px #1e1e1e">Tracks</div></div><div style="position:absolute;left:320px;top:276px;width:3px;height:40px;background:#111"></div><div style="position:absolute;left:326px;top:288.0px;width:16px;height:16px;"><div style="position:absolute;left:8px;top:8px;transform:translate(-50%,-50%) rotate(90deg);white-space:pre;font-size:11.6px;line-height:16px;color:#1e1e1e;-webkit-text-stroke:0.25px #1e1e1e">Movers</div></div><div style="position:absolute;left:320px;top:336px;width:3px;height:42px;background:#111"></div><div style="position:absolute;left:326px;top:349.0px;width:16px;height:16px;"><div style="position:absolute;left:8px;top:8px;transform:translate(-50%,-50%) rotate(90deg);white-space:pre;font-size:11.6px;line-height:16px;color:#1e1e1e;-webkit-text-stroke:0.25px #1e1e1e">Stations</div></div><div style="position:absolute;left:349px;top:168px;width:296px;height:910px;background:#f7f7f7"></div><div style="position:absolute;left:345px;top:168px;width:300px;height:41px;background:linear-gradient(#bfccd8,#c3cfdb)"></div><div style="position:absolute;left:356px;top:175px;width:25px;height:25px;background:#f4f6f8;border:1px solid #444;box-sizing:border-box"></div><svg style="position:absolute;left:359px;top:178px;" width="19" height="19" viewBox="0 0 19 19"><path d="M9.5 2L11 4L13.5 3.5L14 6L16.5 7L15.5 9.5L16.5 12L14 13L13.5 15.5L11 15L9.5 17L8 15L5.5 15.5L5 13L2.5 12L3.5 9.5L2.5 7L5 6L5.5 3.5L8 4Z" fill="#f4f6f8" stroke="#222" stroke-width="1.4"/><rect x="6" y="7.5" width="7" height="4.5" rx="1" fill="#555"/><circle cx="4" cy="3" r="1.5" fill="#1a8ad8"/></svg><div style="position:absolute;left:384px;top:177px;width:149px;height:22px;background:#fbfcfd;border:1px solid #a9b6c2;box-sizing:border-box"></div><div style="position:absolute;left:393px;top:180.0px;height:16px;line-height:16px;font-size:12px;color:#111;white-space:pre;-webkit-text-stroke:0.25px #111;">XtsProcessingUnit 1</div><svg style="position:absolute;left:521px;top:186.0px;" width="8" height="5" viewBox="0 0 8 5"><path d="M0 0H7L3.5 4Z" fill="#222"/></svg><div style="position:absolute;left:349px;top:211px;width:200px;height:17px;background:#fbfbfb;border-bottom:1px solid #d8d8d8;box-sizing:border-box"></div><div style="position:absolute;left:469px;top:211px;width:1px;height:17px;background:#d0d0d0"></div><div style="position:absolute;left:393px;top:211.5px;height:16px;line-height:16px;font-size:11.8px;color:#1e1e1e;white-space:pre;-webkit-text-stroke:0.25px #1e1e1e;">Name</div><div style="position:absolute;left:520px;top:211.5px;height:16px;line-height:16px;font-size:11.8px;color:#1e1e1e;white-space:pre;-webkit-text-stroke:0.25px #1e1e1e;">Axis</div><div style="position:absolute;left:349px;top:228px;width:200px;height:17px;background:#0b63c5"></div><div style="position:absolute;left:357px;top:229px;height:16px;line-height:16px;font-size:11.8px;color:#0a1a30;white-space:pre;-webkit-text-stroke:0.25px #0a1a30;">Mover 1</div><div style="position:absolute;left:476px;top:229px;height:16px;line-height:16px;font-size:11.8px;color:#0a1a30;white-space:pre;-webkit-text-stroke:0.25px #0a1a30;">Axis 1</div><div style="position:absolute;left:357px;top:246px;height:16px;line-height:16px;font-size:11.8px;color:#1e1e1e;white-space:pre;-webkit-text-stroke:0.25px #1e1e1e;">Mover 2</div><div style="position:absolute;left:476px;top:246px;height:16px;line-height:16px;font-size:11.8px;color:#1e1e1e;white-space:pre;-webkit-text-stroke:0.25px #1e1e1e;">Axis 2</div><div style="position:absolute;left:357px;top:263px;height:16px;line-height:16px;font-size:11.8px;color:#1e1e1e;white-space:pre;-webkit-text-stroke:0.25px #1e1e1e;">Mover 3</div><div style="position:absolute;left:476px;top:263px;height:16px;line-height:16px;font-size:11.8px;color:#1e1e1e;white-space:pre;-webkit-text-stroke:0.25px #1e1e1e;">Axis 3</div><div style="position:absolute;left:357px;top:280px;height:16px;line-height:16px;font-size:11.8px;color:#1e1e1e;white-space:pre;-webkit-text-stroke:0.25px #1e1e1e;">Mover 4</div><div style="position:absolute;left:476px;top:280px;height:16px;line-height:16px;font-size:11.8px;color:#1e1e1e;white-space:pre;-webkit-text-stroke:0.25px #1e1e1e;">Axis 4</div><div style="position:absolute;left:642px;top:168px;width:4px;height:910px;background:#e2e2e2"></div><div style="position:absolute;left:641px;top:168px;width:1px;height:910px;background:#b0b0b0"></div><div style="position:absolute;left:646px;top:168px;width:1274px;height:910px;background-image:linear-gradient(45deg,rgba(0,0,0,.12) 25%,transparent 25%,transparent 75%,rgba(0,0,0,.12) 75%),linear-gradient(45deg,rgba(0,0,0,.12) 25%,transparent 25%,transparent 75%,rgba(0,0,0,.12) 75%),linear-gradient(#a4a4a4,#b0b0b0 30%,#b8b8b8);background-size:20px 20px,20px 20px,100% 100%;background-position:1px 0,11px 10px,0 0"></div><svg style="position:absolute;left:0;top:0" width="1920" height="1080" viewBox="0 0 1920 1080"><defs><clipPath id="cbg"><rect x="646" y="168" width="1274" height="910"/></clipPath></defs><g clip-path="url(#cbg)"><path d="M965.00 367.04H1738.00A345.96 345.96 0 0 1 1738.00 1058.96H965.00A345.96 345.96 0 0 1 965.00 367.04Z" fill="none" stroke="#22d472" stroke-width="1.8"/><path d="M965.00 405.85H1738.00A307.89 307.89 0 0 1 1738.00 1021.64H965.00A307.89 307.89 0 0 1 965.00 405.85Z" fill="none" stroke="#ffffff" stroke-width="2.2"/><path d="M965.00 459.42H1738.00A253.58 253.58 0 0 1 1738.00 966.58H965.00A253.58 253.58 0 0 1 965.00 459.42Z" fill="#2b2b2b"/><path d="M965.00 464.69H1738.00A248.31 248.31 0 0 1 1738.00 961.31H965.00A248.31 248.31 0 0 1 965.00 464.69Z" fill="none" stroke="#252525" stroke-width="10.54" /><path d="M965.00 484.84H1738.00A228.16 228.16 0 0 1 1738.00 941.16H965.00A228.16 228.16 0 0 1 965.00 484.84Z" fill="none" stroke="#303030" stroke-width="29.76" /><path d="M965.00 502.82H1738.00A210.18 210.18 0 0 1 1738.00 923.18H965.00A210.18 210.18 0 0 1 965.00 502.82Z" fill="none" stroke="#272727" stroke-width="6.20" /><path d="M965.00 508.40H1738.00A204.60 204.60 0 0 1 1738.00 917.60H965.00A204.60 204.60 0 0 1 965.00 508.40Z" fill="none" stroke="#3a3a3a" stroke-width="4.96" /><path d="M965.00 517.08H1738.00A195.92 195.92 0 0 1 1738.00 908.92H965.00A195.92 195.92 0 0 1 965.00 517.08Z" fill="none" stroke="#2a2a2a" stroke-width="12.40" /><path d="M965.00 535.68H1738.00A177.32 177.32 0 0 1 1738.00 890.32H965.00A177.32 177.32 0 0 1 965.00 535.68Z" fill="none" stroke="#575757" stroke-width="22.32" stroke-dasharray="4.96 6.20"/><path d="M965.00 557.38H1738.00A155.62 155.62 0 0 1 1738.00 868.62H965.00A155.62 155.62 0 0 1 965.00 557.38Z" fill="none" stroke="#464646" stroke-width="7.44" /><path d="M965.00 557.38H1738.00A155.62 155.62 0 0 1 1738.00 868.62H965.00A155.62 155.62 0 0 1 965.00 557.38Z" fill="none" stroke="#2a2a2a" stroke-width="2.48" stroke-dasharray="3.72 39.68" stroke-linecap="round"/><path d="M965.00 615.66H1738.00A97.34 97.34 0 0 1 1738.00 810.34H965.00A97.34 97.34 0 0 1 965.00 615.66Z" fill="none" stroke="#464646" stroke-width="4.96" /><rect x="1031.96" y="637.36" width="639.08" height="151.28" fill="#a9a9a9"/><path d="M1351.5 459.42V637.36M1351.5 788.64V966.58M711.42 713.50H1031.96M1671.04 713.50H1991.58" stroke="#ffffff" stroke-opacity="0.22" stroke-width="1"/><text x="1001" y="1041" transform="rotate(180 1001 1036)" font-size="15" fill="#ffffff" text-anchor="middle">1500</text><text x="1662" y="1041" transform="rotate(180 1662 1036)" font-size="15" fill="#ffffff" text-anchor="middle">1000</text></g></svg><div style="position:absolute;left:548px;top:184px;width:1173px;height:846px;background:#fdfdfd;border:1px solid #6f6f6f;box-sizing:border-box;box-shadow:0 3px 9px rgba(0,0,0,0.32)"></div><svg style="position:absolute;left:556px;top:192px;" width="16" height="16" viewBox="0 0 16 16"><rect x="0" y="0" width="16" height="16" fill="url(#gOr)"/><path d="M3 8Q5 3 10 3" stroke="#f8d898" stroke-width="1.4" fill="none" opacity="0.85"/></svg><div style="position:absolute;left:578px;top:192px;height:16px;line-height:16px;font-size:11.8px;color:#6a6a6a;white-space:pre;-webkit-text-stroke:0.25px #6a6a6a;">XTS Simulation Builder</div><div style="position:absolute;left:1601px;top:200px;width:12px;height:1px;background:#333"></div><div style="position:absolute;left:1646px;top:194px;width:11px;height:11px;border:1px solid #333;box-sizing:border-box"></div><svg style="position:absolute;left:1691px;top:194px;" width="12" height="12" viewBox="0 0 12 12"><path d="M0.5 0.5L11.5 11.5M11.5 0.5L0.5 11.5" stroke="#333" stroke-width="1.1"/></svg><div style="position:absolute;left:554px;top:221px;width:1161px;height:118px;background:linear-gradient(#b7c7d5,#bccbd8)"></div><div style="position:absolute;left:554px;top:259px;width:1009px;height:2px;background:#c9d6e1"></div><div style="position:absolute;left:568px;top:233px;width:17px;height:17px;background:#d3dde6;border:1px solid #c0ccd6;box-sizing:border-box"></div><svg style="position:absolute;left:569px;top:236px;" width="15" height="11" viewBox="0 0 15 11"><path d="M1 5.5L6 1V4H14V7H6V10Z" fill="#3a5fd0"/></svg><div style="position:absolute;left:593px;top:233px;width:17px;height:17px;background:#d3dde6;border:1px solid #c0ccd6;box-sizing:border-box"></div><svg style="position:absolute;left:594px;top:236px;" width="15" height="11" viewBox="0 0 15 11"><path d="M14 5.5L9 1V4H1V7H9V10Z" fill="#1aa04a"/></svg><div style="position:absolute;left:617px;top:233px;width:17px;height:17px;background:#d3dde6;border:1px solid #c0ccd6;box-sizing:border-box"></div><svg style="position:absolute;left:618px;top:236px;" width="15" height="11" viewBox="0 0 15 11"><path d="M14 5.5L9 1V4H1V7H9V10Z" fill="#1aa04a"/></svg><div style="position:absolute;left:641px;top:230px;width:149px;height:21px;background:#fbfcfd;border:1px solid #a9b6c2;box-sizing:border-box"></div><div style="position:absolute;left:651px;top:232.5px;height:16px;line-height:16px;font-size:12px;color:#111;white-space:pre;-webkit-text-stroke:0.25px #111;">Part 1</div><svg style="position:absolute;left:778px;top:238.5px;" width="8" height="5" viewBox="0 0 8 5"><path d="M0 0H7L3.5 4Z" fill="#222"/></svg><svg style="position:absolute;left:797px;top:231px;" width="17" height="17" viewBox="0 0 17 17"><path d="M8.5 1V16M1 8.5H16" stroke="#1fa03a" stroke-width="4"/></svg><svg style="position:absolute;left:823px;top:233px;" width="14" height="14" viewBox="0 0 14 14"><path d="M1 1L13 13M13 1L1 13" stroke="#e02020" stroke-width="2"/></svg><div style="position:absolute;left:845px;top:230px;width:99px;height:21px;background:#fbfcfd;border:1px solid #a9b6c2;box-sizing:border-box"></div><div style="position:absolute;left:855px;top:232.5px;height:16px;line-height:16px;font-size:12px;color:#111;white-space:pre;-webkit-text-stroke:0.25px #111;">Front</div><svg style="position:absolute;left:932px;top:238.5px;" width="8" height="5" viewBox="0 0 8 5"><path d="M0 0H7L3.5 4Z" fill="#222"/></svg><div style="position:absolute;left:952px;top:230px;width:149px;height:21px;background:#fbfcfd;border:1px solid #a9b6c2;box-sizing:border-box"></div><div style="position:absolute;left:962px;top:232.5px;height:16px;line-height:16px;font-size:12px;color:#111;white-space:pre;-webkit-text-stroke:0.25px #111;">AT2001-0250</div><svg style="position:absolute;left:1089px;top:238.5px;" width="8" height="5" viewBox="0 0 8 5"><path d="M0 0H7L3.5 4Z" fill="#222"/></svg><svg style="position:absolute;left:1704px;top:246px;" width="8" height="7" viewBox="0 0 8 7"><path d="M0 0H8M0 3H8L4 7Z" stroke="#222" fill="#222" stroke-width="1"/></svg><div style="position:absolute;left:1566px;top:289px;width:149px;height:21px;background:#fbfcfd;border:1px solid #a9b6c2;box-sizing:border-box"></div><div style="position:absolute;left:1575px;top:291.5px;height:16px;line-height:16px;font-size:12px;color:#111;white-space:pre;-webkit-text-stroke:0.25px #111;">AtEndOfActivePart</div><svg style="position:absolute;left:1703px;top:297.5px;" width="8" height="5" viewBox="0 0 8 5"><path d="M0 0H7L3.5 4Z" fill="#222"/></svg><div style="position:absolute;left:554px;top:261px;width:71px;height:77px;background:#0a60c6"></div><div style="position:absolute;left:558px;top:268px;width:63px;height:63px;background:#fafbfc;border-radius:3px"></div><div style="position:absolute;left:560px;top:284px;width:60px;height:31px;background:#262626"></div><div style="position:absolute;left:560px;top:292px;width:60px;height:1px;background:#333"></div><div style="position:absolute;left:562px;top:297px;width:56px;height:2px;background:repeating-linear-gradient(90deg,#444 0 1px,transparent 1px 4px)"></div><div style="position:absolute;left:560px;top:301px;width:60px;height:1px;background:#3c3c3c"></div><div style="position:absolute;left:582px;top:305px;width:14px;height:4px;background:#3a3a3a"></div><div style="position:absolute;left:631px;top:269px;width:62px;height:62px;background:#f9fafb;border-radius:3px;box-shadow:0 0 1px rgba(0,0,0,0.25)"></div><div style="position:absolute;left:632px;top:282px;width:60px;height:31px;background:#262626"></div><div style="position:absolute;left:682px;top:313px;width:3px;height:5px;background:#1a9a3a"></div><div style="position:absolute;left:685px;top:313px;width:3px;height:5px;background:#e06a20"></div><div style="position:absolute;left:632px;top:290px;width:60px;height:1px;background:#333"></div><div style="position:absolute;left:634px;top:295px;width:56px;height:2px;background:repeating-linear-gradient(90deg,#444 0 1px,transparent 1px 4px)"></div><div style="position:absolute;left:632px;top:299px;width:60px;height:1px;background:#3c3c3c"></div><div style="position:absolute;left:654px;top:303px;width:14px;height:4px;background:#3a3a3a"></div><div style="position:absolute;left:703px;top:269px;width:62px;height:62px;background:#f9fafb;border-radius:3px;box-shadow:0 0 1px rgba(0,0,0,0.25)"></div><svg style="position:absolute;left:703px;top:269px;" width="62" height="62" viewBox="0 0 62 62"><path d="M50 0V60A37.5 30 0 0 1 50 0Z" fill="#262626"/></svg><div style="position:absolute;left:775px;top:269px;width:62px;height:62px;background:#f9fafb;border-radius:3px;box-shadow:0 0 1px rgba(0,0,0,0.25)"></div><svg style="position:absolute;left:775px;top:269px;" width="62" height="62" viewBox="0 0 62 62"><path d="M2 23Q30 10 61 11V39Q35 40 14 50Z" fill="#262626"/></svg><div style="position:absolute;left:847px;top:269px;width:62px;height:62px;background:#f9fafb;border-radius:3px;box-shadow:0 0 1px rgba(0,0,0,0.25)"></div><svg style="position:absolute;left:847px;top:269px;" width="62" height="62" viewBox="0 0 62 62"><path d="M10 9Q35 20 61 19V48Q35 48 2 37Z" fill="#262626"/></svg><div style="position:absolute;left:919px;top:269px;width:62px;height:62px;background:#f9fafb;border-radius:3px;box-shadow:0 0 1px rgba(0,0,0,0.25)"></div><svg style="position:absolute;left:919px;top:269px;" width="62" height="62" viewBox="0 0 62 62"><path d="M1 32Q30 10 61 8V38Q40 38 22 54Z" fill="#262626"/></svg><div style="position:absolute;left:991px;top:269px;width:62px;height:62px;background:#f9fafb;border-radius:3px;box-shadow:0 0 1px rgba(0,0,0,0.25)"></div><svg style="position:absolute;left:991px;top:269px;" width="62" height="62" viewBox="0 0 62 62"><path d="M2 23Q30 10 61 11V39Q35 40 14 50Z" fill="#262626"/><rect x="55" y="39" width="3" height="4" fill="#e06a20"/><rect x="52" y="39" width="3" height="4" fill="#1a9a3a"/></svg><div style="position:absolute;left:1063px;top:269px;width:62px;height:62px;background:#f9fafb;border-radius:3px;box-shadow:0 0 1px rgba(0,0,0,0.25)"></div><svg style="position:absolute;left:1063px;top:269px;" width="62" height="62" viewBox="0 0 62 62"><path d="M10 9Q35 20 61 19V48Q35 48 2 37Z" fill="#262626"/><rect x="55" y="48" width="3" height="4" fill="#e06a20"/><rect x="52" y="48" width="3" height="4" fill="#1a9a3a"/></svg><div style="position:absolute;left:1135px;top:269px;width:62px;height:62px;background:#f9fafb;border-radius:3px;box-shadow:0 0 1px rgba(0,0,0,0.25)"></div><svg style="position:absolute;left:1135px;top:269px;" width="62" height="62" viewBox="0 0 62 62"><path d="M1 32Q30 10 61 8V38Q40 38 22 54Z" fill="#262626"/><rect x="55" y="37" width="3" height="4" fill="#e06a20"/><rect x="52" y="37" width="3" height="4" fill="#1a9a3a"/></svg><div style="position:absolute;left:1207px;top:269px;width:62px;height:62px;background:#f9fafb;border-radius:3px;box-shadow:0 0 1px rgba(0,0,0,0.25)"></div><div style="position:absolute;left:1208px;top:283px;width:60px;height:34px;background:#262626"></div><div style="position:absolute;left:1208px;top:292px;width:60px;height:1px;background:#333"></div><div style="position:absolute;left:1210px;top:297px;width:56px;height:2px;background:repeating-linear-gradient(90deg,#444 0 1px,transparent 1px 4px)"></div><div style="position:absolute;left:1208px;top:302px;width:60px;height:1px;background:#3c3c3c"></div><div style="position:absolute;left:1230px;top:306px;width:14px;height:4px;background:#3a3a3a"></div><div style="position:absolute;left:1279px;top:269px;width:62px;height:62px;background:#f9fafb;border-radius:3px;box-shadow:0 0 1px rgba(0,0,0,0.25)"></div><div style="position:absolute;left:1280px;top:279px;width:60px;height:31px;background:#262626"></div><div style="position:absolute;left:1333px;top:296px;width:6px;height:26px;background:#7c7c7c"></div><div style="position:absolute;left:1320px;top:314px;width:19px;height:7px;background:#727272"></div><div style="position:absolute;left:1323px;top:321px;width:16px;height:2px;background:#5a5a5a"></div><div style="position:absolute;left:1351px;top:269px;width:62px;height:62px;background:#f9fafb;border-radius:3px;box-shadow:0 0 1px rgba(0,0,0,0.25)"></div><div style="position:absolute;left:1352px;top:279px;width:60px;height:31px;background:#262626"></div><div style="position:absolute;left:1405px;top:296px;width:6px;height:26px;background:#7c7c7c"></div><div style="position:absolute;left:1392px;top:314px;width:19px;height:7px;background:#727272"></div><div style="position:absolute;left:1395px;top:321px;width:16px;height:2px;background:#5a5a5a"></div><div style="position:absolute;left:1423px;top:269px;width:62px;height:62px;background:#f9fafb;border-radius:3px;box-shadow:0 0 1px rgba(0,0,0,0.25)"></div><div style="position:absolute;left:1424px;top:284px;width:60px;height:12px;background:#7f7f7f"></div><div style="position:absolute;left:1424px;top:296px;width:60px;height:21px;background:#8f8f8f;border:1px solid #6a6a90;box-sizing:border-box"></div><div style="position:absolute;left:1424px;top:295px;width:60px;height:1px;background:#dddddd"></div><div style="position:absolute;left:1495px;top:269px;width:62px;height:62px;background:#f9fafb;border-radius:3px;box-shadow:0 0 1px rgba(0,0,0,0.25)"></div><svg style="position:absolute;left:1495px;top:269px;" width="62" height="62" viewBox="0 0 62 62"><path d="M49 1V61A35 30 0 0 1 49 1Z" fill="#8a8a8a"/><path d="M49 8A27 22 0 0 0 49 54" fill="none" stroke="#d0d0d0" stroke-width="1"/></svg><div style="position:absolute;left:554px;top:340px;width:1161px;height:14px;background:#dfe3e6"></div><div style="position:absolute;left:575px;top:341px;width:1093px;height:12px;background:#aaadb0"></div><svg style="position:absolute;left:560px;top:342px;" width="7" height="10" viewBox="0 0 7 10"><path d="M6 0V10L0 5Z" fill="#555"/></svg><svg style="position:absolute;left:1703px;top:342px;" width="7" height="10" viewBox="0 0 7 10"><path d="M0 0V10L6 5Z" fill="#555"/></svg><div style="position:absolute;left:554px;top:354px;width:30px;height:599px;background:#fbfbfb"></div><div style="position:absolute;left:556px;top:366px;width:3px;height:46px;background:#111"></div><div style="position:absolute;left:563px;top:381.0px;width:16px;height:16px;"><div style="position:absolute;left:8px;top:8px;transform:translate(-50%,-50%) rotate(90deg);white-space:pre;font-size:11.6px;line-height:16px;color:#1e1e1e;-webkit-text-stroke:0.25px #1e1e1e">Modules</div></div><div style="position:absolute;left:556px;top:432px;width:3px;height:26px;background:#111"></div><div style="position:absolute;left:563px;top:437.0px;width:16px;height:16px;"><div style="position:absolute;left:8px;top:8px;transform:translate(-50%,-50%) rotate(90deg);white-space:pre;font-size:11.6px;line-height:16px;color:#1e1e1e;-webkit-text-stroke:0.25px #1e1e1e">Parts</div></div><svg style="position:absolute;left:0;top:0" width="1920" height="1080" viewBox="0 0 1920 1080"><defs><clipPath id="cfg"><rect x="584" y="355" width="1131" height="598"/></clipPath></defs><g clip-path="url(#cfg)"><rect x="584" y="355" width="1131" height="598" fill="#c3c3c3"/><path d="M839.00 406.30H1459.00A248.30 248.30 0 0 1 1459.00 902.90H839.00A248.30 248.30 0 0 1 839.00 406.30Z" fill="none" stroke="#ffffff" stroke-width="2.2"/><path d="M839.00 449.50H1459.00A204.50 204.50 0 0 1 1459.00 858.50H839.00A204.50 204.50 0 0 1 839.00 449.50Z" fill="#2b2b2b"/><path d="M839.00 453.75H1459.00A200.25 200.25 0 0 1 1459.00 854.25H839.00A200.25 200.25 0 0 1 839.00 453.75Z" fill="none" stroke="#252525" stroke-width="8.50" /><path d="M839.00 470.00H1459.00A184.00 184.00 0 0 1 1459.00 838.00H839.00A184.00 184.00 0 0 1 839.00 470.00Z" fill="none" stroke="#303030" stroke-width="24.00" /><path d="M839.00 484.50H1459.00A169.50 169.50 0 0 1 1459.00 823.50H839.00A169.50 169.50 0 0 1 839.00 484.50Z" fill="none" stroke="#272727" stroke-width="5.00" /><path d="M839.00 489.00H1459.00A165.00 165.00 0 0 1 1459.00 819.00H839.00A165.00 165.00 0 0 1 839.00 489.00Z" fill="none" stroke="#3a3a3a" stroke-width="4.00" /><path d="M839.00 496.00H1459.00A158.00 158.00 0 0 1 1459.00 812.00H839.00A158.00 158.00 0 0 1 839.00 496.00Z" fill="none" stroke="#2a2a2a" stroke-width="10.00" /><path d="M839.00 511.00H1459.00A143.00 143.00 0 0 1 1459.00 797.00H839.00A143.00 143.00 0 0 1 839.00 511.00Z" fill="none" stroke="#575757" stroke-width="18.00" stroke-dasharray="4.00 5.00"/><path d="M839.00 528.50H1459.00A125.50 125.50 0 0 1 1459.00 779.50H839.00A125.50 125.50 0 0 1 839.00 528.50Z" fill="none" stroke="#464646" stroke-width="6.00" /><path d="M839.00 528.50H1459.00A125.50 125.50 0 0 1 1459.00 779.50H839.00A125.50 125.50 0 0 1 839.00 528.50Z" fill="none" stroke="#2a2a2a" stroke-width="2.00" stroke-dasharray="3.00 32.00" stroke-linecap="round"/><path d="M839.00 575.50H1459.00A78.50 78.50 0 0 1 1459.00 732.50H839.00A78.50 78.50 0 0 1 839.00 575.50Z" fill="none" stroke="#464646" stroke-width="4.00" /><rect x="893.00" y="593.00" width="512.00" height="122.00" fill="#c6c6c6"/><path d="M1149.5 449.50V593.00M1149.5 715.00V858.50M634.50 654.50H893.00M1405.00 654.50H1663.50" stroke="#ffffff" stroke-opacity="0.22" stroke-width="1"/><rect x="884" y="449.50" width="265" height="143.50" fill="#ffffff" fill-opacity="0.075"/><path d="M883.5 397V414M1149.5 397V414M1415.5 397V414M883.5 894V911M1149.5 894V911M1415.5 894V911M584 655H599M1699 655H1714" stroke="#fff" stroke-width="1.7"/><text x="886" y="401" font-size="14" fill="#fff">0</text><text x="1418" y="401" font-size="14" fill="#fff">500</text><text x="865" y="919" transform="rotate(180 865 914)" font-size="14" fill="#fff" text-anchor="middle">1500</text><text x="1397" y="919" transform="rotate(180 1397 914)" font-size="14" fill="#fff" text-anchor="middle">1000</text><rect x="912" y="593" width="12" height="22" fill="#f58a3a"/><rect x="930" y="593" width="6" height="20" fill="#2aa04a"/></g></svg><div style="position:absolute;left:589px;top:361px;width:85px;height:33px;background:#cdcdcd;border:1px solid #b9b9b9;border-radius:4px;box-sizing:border-box"></div><div style="position:absolute;left:596px;top:368px;width:18px;height:19px;background:#e8eef4"></div><svg style="position:absolute;left:596px;top:368px;" width="18" height="19" viewBox="0 0 18 19"><circle cx="8" cy="8" r="5.5" fill="#cfe0ef" stroke="#333" stroke-width="1.5"/><path d="M12 12L17 17" stroke="#333" stroke-width="2.5"/></svg><div style="position:absolute;left:622px;top:368px;width:18px;height:19px;background:#f4f4f4"></div><svg style="position:absolute;left:622px;top:368px;" width="18" height="19" viewBox="0 0 18 19"><circle cx="8" cy="8.5" r="6" fill="#eee" stroke="#666" stroke-width="1"/><path d="M12 12.5L16.5 17" stroke="#444" stroke-width="2.8"/><path d="M3 5.5L5 4.5V12M10 5.5L12 4.5V12" stroke="#111" stroke-width="2.2" fill="none"/><rect x="7" y="6" width="2" height="2" fill="#111"/><rect x="7" y="9.5" width="2" height="2" fill="#111"/></svg><div style="position:absolute;left:648px;top:368px;width:19px;height:20px;background:#a9a9a9;border-radius:2px"></div><svg style="position:absolute;left:648px;top:368px;" width="19" height="20" viewBox="0 0 19 20"><circle cx="8" cy="8" r="5.5" fill="none" stroke="#555" stroke-width="1.5"/><path d="M12 12L17 17" stroke="#555" stroke-width="2.5"/></svg><div style="position:absolute;left:549px;top:953px;width:1171px;height:27px;background:#fdfdfd"></div><div style="position:absolute;left:557px;top:957px;height:16px;line-height:16px;font-size:12px;color:#1e1e1e;white-space:pre;-webkit-text-stroke:0.25px #1e1e1e;">Parts: 1</div><div style="position:absolute;left:638px;top:957px;height:16px;line-height:16px;font-size:12px;color:#1e1e1e;white-space:pre;-webkit-text-stroke:0.25px #1e1e1e;">Part Info: 6 Modules</div><div style="position:absolute;left:784px;top:957px;height:16px;line-height:16px;font-size:12px;color:#1e1e1e;white-space:pre;-webkit-text-stroke:0.25px #1e1e1e;">Length: 2000 mm</div><div style="position:absolute;left:930px;top:957px;height:16px;line-height:16px;font-size:12px;color:#1e1e1e;white-space:pre;-webkit-text-stroke:0.25px #1e1e1e;">Selected Modules: 1</div><div style="position:absolute;left:548px;top:980px;width:1173px;height:50px;background:linear-gradient(90deg,#444 0%,#4a4a4a 50%,#4c4c4c 100%)"></div><svg style="position:absolute;left:1634px;top:995px;" width="20" height="20" viewBox="0 0 20 20"><path d="M19 0V20L0 10Z" fill="#737373"/></svg><svg style="position:absolute;left:1688px;top:995px;" width="20" height="20" viewBox="0 0 20 20"><path d="M1 0V20L20 10Z" fill="#a3a3a3"/></svg>
</body></html>
